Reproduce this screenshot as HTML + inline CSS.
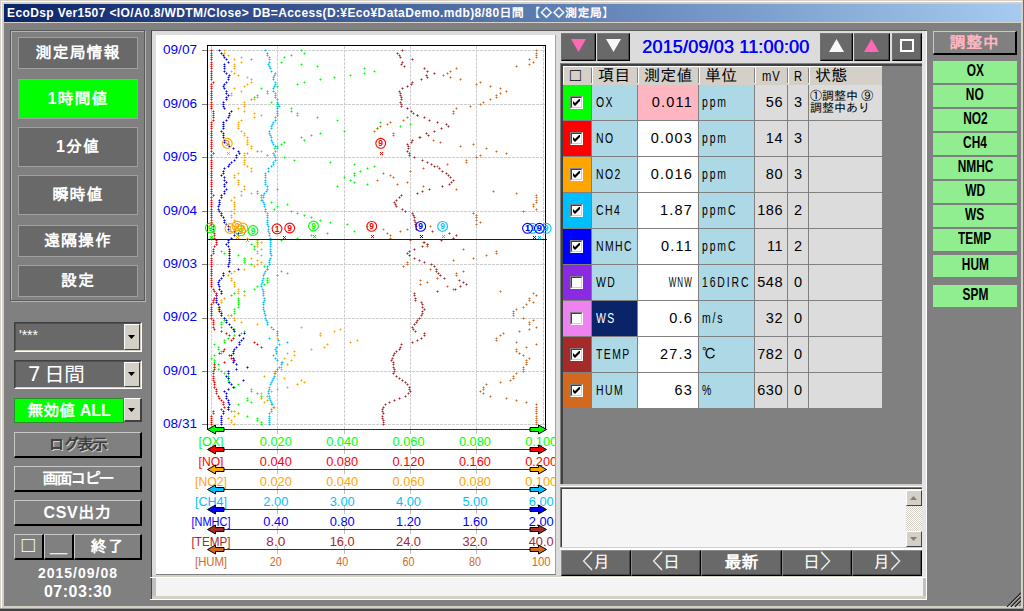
<!DOCTYPE html><html lang="ja"><head><meta charset="utf-8"><title>EcoDsp</title><style>
html,body{margin:0;padding:0;}
body{width:1024px;height:611px;overflow:hidden;background:#808080;position:relative;font-family:"Liberation Sans","IPAGothic","Noto Sans CJK JP",sans-serif;}
div,span{position:absolute;box-sizing:border-box;white-space:nowrap;}
.t{line-height:1;}
.btn{background:#696969;border:1px solid #a0a0a0;color:#fff;text-align:center;}
.rb{background:#808080;border-top:1px solid #c8c8c8;border-left:1px solid #c8c8c8;border-right:2px solid #000;border-bottom:2px solid #000;color:#fff;text-align:center;}
.db{background:#696969;border-top:1px solid #8c8c8c;border-left:1px solid #8c8c8c;border-right:1px solid #000;border-bottom:1px solid #000;color:#fff;text-align:center;box-shadow:inset -1px -1px 0 #484848;}
.tb{border-top-color:#7a7a7a;border-left-color:#707070;}
.gl{background:#90ee90;color:#000;text-align:center;font-weight:bold;font-size:17px;}
.gl span{position:static;display:inline-block;transform:scaleX(.7);line-height:20px;}
.cell{overflow:hidden;font-size:14.5px;line-height:35px;color:#000;}
</style></head><body><div style="left:0px;top:0px;width:1024px;height:611px;background:#d4d0c8;"></div>
<div style="left:1px;top:1px;width:1021px;height:1px;background:#ffffff;"></div>
<div style="left:1px;top:1px;width:1px;height:607px;background:#ffffff;"></div>
<div style="left:4px;top:4px;width:1017px;height:602px;background:#808080;"></div>
<div style="left:0px;top:609px;width:1024px;height:2px;background:#404040;"></div>
<div style="left:0px;top:608px;width:1024px;height:1px;background:#a09d96;"></div>
<div style="left:1023px;top:0px;width:1px;height:611px;background:#6e6c68;"></div>
<div style="left:4px;top:4px;width:1017px;height:18px;background:linear-gradient(to right,#0a246a,#a6caf0);"></div>
<div style="left:4px;top:22px;width:1017px;height:1px;background:#d4d0c8;"></div>
<div class="t" id="title" style="left:7px;top:7px;color:#fff;font-weight:bold;font-size:12px;letter-spacing:0.38px;">EcoDsp Ver1507 &lt;IO/A0.8/WDTM/Close&gt; DB=Access(D:¥Eco¥DataDemo.mdb)8/80日間 【◇◇測定局】</div>
<div style="left:11px;top:31px;width:135px;height:271px;border:1px solid #b4b4b4;"></div>
<div style="left:10px;top:30px;width:135px;height:271px;border:1px solid #5a5a5a;"></div>
<div class="btn" style="left:18px;top:37px;width:120px;height:32px;background:#696969;font-size:16px;line-height:30px;font-weight:bold;letter-spacing:1px;">測定局情報</div>
<div class="btn" style="left:18px;top:79px;width:120px;height:40px;background:#00ff00;font-size:16px;line-height:38px;font-weight:bold;letter-spacing:1px;">1時間値</div>
<div class="btn" style="left:18px;top:127px;width:120px;height:40px;background:#696969;font-size:16px;line-height:38px;font-weight:bold;letter-spacing:1px;">1分値</div>
<div class="btn" style="left:18px;top:175px;width:120px;height:40px;background:#696969;font-size:16px;line-height:38px;font-weight:bold;letter-spacing:1px;">瞬時値</div>
<div class="btn" style="left:18px;top:225px;width:120px;height:32px;background:#696969;font-size:16px;line-height:30px;font-weight:bold;letter-spacing:1px;">遠隔操作</div>
<div class="btn" style="left:18px;top:265px;width:120px;height:32px;background:#696969;font-size:16px;line-height:30px;font-weight:bold;letter-spacing:1px;">設定</div>
<div style="left:14px;top:322px;width:128px;height:30px;border-top:1px solid #404040;border-left:1px solid #404040;border-right:1px solid #fff;border-bottom:1px solid #fff;"></div>
<div style="left:15px;top:323px;width:126px;height:28px;background:#696969;border-top:1px solid #505050;border-left:1px solid #505050;border-right:1px solid #d4d0c8;border-bottom:1px solid #d4d0c8;"></div>
<div class="t" style="left:19px;top:320px;height:30px;line-height:30px;letter-spacing:0px;color:#fff;font-size:14px;">'***</div>
<div style="left:124px;top:324px;width:16px;height:26px;background:#d4d0c8;border-top:1px solid #fff;border-left:1px solid #fff;border-right:1px solid #404040;border-bottom:1px solid #404040;"></div>
<svg style="position:absolute;left:128px;top:335px" width="8" height="5"><path d="M0 0h7l-3.5 4z" fill="#000"/></svg>
<div style="left:14px;top:360px;width:128px;height:29px;border-top:1px solid #404040;border-left:1px solid #404040;border-right:1px solid #fff;border-bottom:1px solid #fff;"></div>
<div style="left:15px;top:361px;width:126px;height:27px;background:#696969;border-top:1px solid #505050;border-left:1px solid #505050;border-right:1px solid #d4d0c8;border-bottom:1px solid #d4d0c8;"></div>
<div class="t" style="left:24px;top:360px;height:29px;line-height:29px;letter-spacing:-1px;color:#fff;font-size:21px;">７日間</div>
<div style="left:124px;top:362px;width:16px;height:25px;background:#d4d0c8;border-top:1px solid #fff;border-left:1px solid #fff;border-right:1px solid #404040;border-bottom:1px solid #404040;"></div>
<svg style="position:absolute;left:128px;top:372px" width="8" height="5"><path d="M0 0h7l-3.5 4z" fill="#000"/></svg>
<div style="left:14px;top:398px;width:110px;height:25px;background:#00ff00;border:1px solid #2e8b2e;"></div>
<div class="t" style="left:14px;top:398px;width:110px;height:25px;line-height:25px;color:#fff;font-size:16px;font-weight:bold;text-align:center;">無効値 ALL</div>
<div style="left:124px;top:398px;width:18px;height:24px;background:#d4d0c8;border-top:1px solid #fff;border-left:1px solid #fff;border-right:2px solid #404040;border-bottom:2px solid #404040;"></div>
<svg style="position:absolute;left:128px;top:408px" width="8" height="5"><path d="M0 0h7l-3.5 4z" fill="#000"/></svg>
<div class="rb" style="left:14px;top:432px;width:128px;height:26px;font-size:16px;line-height:23px;color:#404040;font-weight:bold;text-shadow:1px 1px 0 #d0d0d0;letter-spacing:-1.5px;">ログ表示</div>
<div class="rb" style="left:14px;top:466px;width:128px;height:26px;font-size:16px;line-height:23px;color:#fff;font-weight:bold;letter-spacing:-2px;">画面コピー</div>
<div class="rb" style="left:14px;top:500px;width:128px;height:26px;font-size:16px;line-height:23px;color:#fff;font-weight:bold;letter-spacing:0.6px;">CSV出力</div>
<div class="rb" style="left:14px;top:534px;width:30px;height:26px;font-size:22px;line-height:23px;color:#fff;font-weight:bold;line-height:20px;">□</div>
<div class="rb" style="left:44px;top:534px;width:30px;height:26px;font-size:17px;line-height:23px;color:#fff;font-weight:bold;">＿</div>
<div class="rb" style="left:74px;top:534px;width:68px;height:26px;font-size:16px;line-height:23px;color:#fff;font-weight:bold;letter-spacing:1px;">終了</div>
<div class="t" style="left:14px;top:566px;width:128px;text-align:center;color:#fff;font-weight:bold;font-size:14px;letter-spacing:1px;">2015/09/08</div>
<div class="t" style="left:14px;top:584px;width:128px;text-align:center;color:#fff;font-weight:bold;font-size:16px;letter-spacing:0.5px;">07:03:30</div>
<div style="left:151px;top:30px;width:776px;height:1px;background:#5a5a5a;"></div>
<div style="left:151px;top:30px;width:1px;height:569px;background:#484848;"></div>
<div style="left:152px;top:31px;width:409px;height:544px;background:#dcdcdc;"></div>
<div style="left:156px;top:35px;width:399px;height:539px;background:#ffffff;"></div>
<div style="left:555px;top:35px;width:1px;height:539px;background:#a0a0a0;"></div>
<div style="left:156px;top:574px;width:400px;height:1px;background:#808080;"></div>
<div style="left:152px;top:575px;width:775px;height:2px;background:#d4d0c8;"></div>
<div style="left:150px;top:577px;width:777px;height:1px;background:#ffffff;"></div>
<div style="left:152px;top:578px;width:774px;height:18px;background:#f4f4f4;border-left:4px solid #c0c0c0;"></div>
<div style="left:152px;top:596px;width:775px;height:3px;background:#d4d0c8;"></div>
<div style="left:150px;top:599px;width:777px;height:1px;background:#ffffff;"></div>
<div style="left:923px;top:578px;width:3px;height:18px;background:#c0c0c0;"></div>
<div style="left:926px;top:578px;width:1px;height:21px;background:#ffffff;"></div>
<svg style="position:absolute;left:156px;top:35px" width="399" height="539" viewBox="156 35 399 539" font-family="'Liberation Sans','IPAGothic',sans-serif">
<path d="M202 50.5H208" stroke="#808080" stroke-width="1" shape-rendering="crispEdges"/>
<path d="M202 104.5H208" stroke="#808080" stroke-width="1" shape-rendering="crispEdges"/>
<path d="M202 157.5H208" stroke="#808080" stroke-width="1" shape-rendering="crispEdges"/>
<path d="M202 211.5H208" stroke="#808080" stroke-width="1" shape-rendering="crispEdges"/>
<path d="M202 264.5H208" stroke="#808080" stroke-width="1" shape-rendering="crispEdges"/>
<path d="M202 318.5H208" stroke="#808080" stroke-width="1" shape-rendering="crispEdges"/>
<path d="M202 371.5H208" stroke="#808080" stroke-width="1" shape-rendering="crispEdges"/>
<path d="M202 424.5H208" stroke="#808080" stroke-width="1" shape-rendering="crispEdges"/>
<path d="M208 50.5H545 M208 104.5H545 M208 157.5H545 M208 211.5H545 M208 264.5H545 M208 318.5H545 M208 371.5H545 M208 424.5H545 M211.5 46V429 M277.5 46V429 M344.5 46V429 M410.5 46V429 M476.5 46V429 M543.5 46V429" stroke="#cecece" stroke-width="1" stroke-dasharray="3 1" fill="none" shape-rendering="crispEdges"/>
<path d="M277.5 429.5V434.0 M277.5 446.0V454.0 M277.5 466.0V474.0 M277.5 486.0V494.0 M277.5 506.0V514.0 M277.5 526.0V534.0 M277.5 546.0V554.0 M344.5 429.5V434.0 M344.5 446.0V454.0 M344.5 466.0V474.0 M344.5 486.0V494.0 M344.5 506.0V514.0 M344.5 526.0V534.0 M344.5 546.0V554.0 M410.5 429.5V434.0 M410.5 446.0V454.0 M410.5 466.0V474.0 M410.5 486.0V494.0 M410.5 506.0V514.0 M410.5 526.0V534.0 M410.5 546.0V554.0 M476.5 429.5V434.0 M476.5 446.0V454.0 M476.5 466.0V474.0 M476.5 486.0V494.0 M476.5 506.0V514.0 M476.5 526.0V534.0 M476.5 546.0V554.0" stroke="#c0c0c0" stroke-width="1" fill="none" shape-rendering="crispEdges"/>
<text x="163" y="54.3" font-size="13.5" fill="#0000ff" textLength="34" lengthAdjust="spacingAndGlyphs">09/07</text>
<text x="163" y="107.7" font-size="13.5" fill="#0000ff" textLength="34" lengthAdjust="spacingAndGlyphs">09/06</text>
<text x="163" y="161.2" font-size="13.5" fill="#0000ff" textLength="34" lengthAdjust="spacingAndGlyphs">09/05</text>
<text x="163" y="214.6" font-size="13.5" fill="#0000ff" textLength="34" lengthAdjust="spacingAndGlyphs">09/04</text>
<text x="163" y="268.0" font-size="13.5" fill="#0000ff" textLength="34" lengthAdjust="spacingAndGlyphs">09/03</text>
<text x="163" y="321.4" font-size="13.5" fill="#0000ff" textLength="34" lengthAdjust="spacingAndGlyphs">09/02</text>
<text x="163" y="374.9" font-size="13.5" fill="#0000ff" textLength="34" lengthAdjust="spacingAndGlyphs">09/01</text>
<text x="163" y="428.3" font-size="13.5" fill="#0000ff" textLength="34" lengthAdjust="spacingAndGlyphs">08/31</text>
<path d="M260 424h3v1h-3zM261 423h1v3h-1zM260 422h3v1h-3zM261 421h1v3h-1zM256 420h3v1h-3zM257 419h1v3h-1zM256 418h3v1h-3zM257 417h1v3h-1zM246 416h3v1h-3zM247 415h1v3h-1zM237 413h3v1h-3zM238 412h1v3h-1zM230 411h3v1h-3zM231 410h1v3h-1zM227 409h3v1h-3zM228 408h1v3h-1zM227 407h3v1h-3zM228 406h1v3h-1zM237 404h3v1h-3zM238 403h1v3h-1zM250 402h3v1h-3zM251 401h1v3h-1zM246 400h3v1h-3zM247 399h1v3h-1zM246 398h3v1h-3zM247 397h1v3h-1zM260 396h3v1h-3zM261 395h1v3h-1zM256 393h3v1h-3zM257 392h1v3h-1zM250 391h3v1h-3zM251 390h1v3h-1zM250 389h3v1h-3zM251 388h1v3h-1zM233 387h3v1h-3zM234 386h1v3h-1zM237 384h3v1h-3zM238 383h1v3h-1zM227 382h3v1h-3zM228 381h1v3h-1zM227 380h3v1h-3zM228 379h1v3h-1zM227 378h3v1h-3zM228 377h1v3h-1zM227 376h3v1h-3zM228 375h1v3h-1zM223 373h3v1h-3zM224 372h1v3h-1zM220 371h3v1h-3zM221 370h1v3h-1zM217 369h3v1h-3zM218 368h1v3h-1zM213 367h3v1h-3zM214 366h1v3h-1zM217 364h3v1h-3zM218 363h1v3h-1zM213 362h3v1h-3zM214 361h1v3h-1zM213 360h3v1h-3zM214 359h1v3h-1zM210 358h3v1h-3zM211 357h1v3h-1zM213 355h3v1h-3zM214 354h1v3h-1zM220 353h3v1h-3zM221 352h1v3h-1zM220 351h3v1h-3zM221 350h1v3h-1zM217 349h3v1h-3zM218 348h1v3h-1zM217 347h3v1h-3zM218 346h1v3h-1zM213 344h3v1h-3zM214 343h1v3h-1zM223 342h3v1h-3zM224 341h1v3h-1zM223 340h3v1h-3zM224 339h1v3h-1zM227 338h3v1h-3zM228 337h1v3h-1zM233 335h3v1h-3zM234 334h1v3h-1zM240 333h3v1h-3zM241 332h1v3h-1zM243 331h3v1h-3zM244 330h1v3h-1zM233 329h3v1h-3zM234 328h1v3h-1zM220 327h3v1h-3zM221 326h1v3h-1zM220 324h3v1h-3zM221 323h1v3h-1zM220 322h3v1h-3zM221 321h1v3h-1zM223 320h3v1h-3zM224 319h1v3h-1zM223 318h3v1h-3zM224 317h1v3h-1zM230 315h3v1h-3zM231 314h1v3h-1zM233 313h3v1h-3zM234 312h1v3h-1zM233 311h3v1h-3zM234 310h1v3h-1zM233 309h3v1h-3zM234 308h1v3h-1zM237 307h3v1h-3zM238 306h1v3h-1zM237 304h3v1h-3zM238 303h1v3h-1zM237 302h3v1h-3zM238 301h1v3h-1zM237 300h3v1h-3zM238 299h1v3h-1zM237 298h3v1h-3zM238 297h1v3h-1zM230 295h3v1h-3zM231 294h1v3h-1zM233 293h3v1h-3zM234 292h1v3h-1zM243 291h3v1h-3zM244 290h1v3h-1zM253 289h3v1h-3zM254 288h1v3h-1zM256 286h3v1h-3zM257 285h1v3h-1zM263 284h3v1h-3zM264 283h1v3h-1zM266 282h3v1h-3zM267 281h1v3h-1zM266 280h3v1h-3zM267 279h1v3h-1zM266 278h3v1h-3zM267 277h1v3h-1zM276 275h3v1h-3zM277 274h1v3h-1zM286 273h3v1h-3zM287 272h1v3h-1zM280 271h3v1h-3zM281 270h1v3h-1zM266 269h3v1h-3zM267 268h1v3h-1zM263 266h3v1h-3zM264 265h1v3h-1zM250 264h3v1h-3zM251 263h1v3h-1zM243 262h3v1h-3zM244 261h1v3h-1zM243 260h3v1h-3zM244 259h1v3h-1zM243 258h3v1h-3zM244 257h1v3h-1zM237 255h3v1h-3zM238 254h1v3h-1zM223 253h3v1h-3zM224 252h1v3h-1zM220 251h3v1h-3zM221 250h1v3h-1zM253 249h3v1h-3zM254 248h1v3h-1zM253 246h3v1h-3zM254 245h1v3h-1zM250 244h3v1h-3zM251 243h1v3h-1zM256 242h3v1h-3zM257 241h1v3h-1zM280 240h3v1h-3zM281 239h1v3h-1zM296 238h3v1h-3zM297 237h1v3h-1zM310 235h3v1h-3zM311 234h1v3h-1zM326 233h3v1h-3zM327 232h1v3h-1zM353 231h3v1h-3zM354 230h1v3h-1zM382 229h3v1h-3zM383 228h1v3h-1zM366 226h3v1h-3zM367 225h1v3h-1zM346 224h3v1h-3zM347 223h1v3h-1zM329 222h3v1h-3zM330 221h1v3h-1zM319 220h3v1h-3zM320 219h1v3h-1zM310 217h3v1h-3zM311 216h1v3h-1zM303 215h3v1h-3zM304 214h1v3h-1zM296 213h3v1h-3zM297 212h1v3h-1zM290 211h3v1h-3zM291 210h1v3h-1zM273 209h3v1h-3zM274 208h1v3h-1zM276 206h3v1h-3zM277 205h1v3h-1zM286 204h3v1h-3zM287 203h1v3h-1zM270 202h3v1h-3zM271 201h1v3h-1zM260 200h3v1h-3zM261 199h1v3h-1zM260 197h3v1h-3zM261 196h1v3h-1zM260 195h3v1h-3zM261 194h1v3h-1zM256 193h3v1h-3zM257 192h1v3h-1zM256 191h3v1h-3zM257 190h1v3h-1zM276 189h3v1h-3zM277 188h1v3h-1zM336 186h3v1h-3zM337 185h1v3h-1zM366 184h3v1h-3zM367 183h1v3h-1zM353 182h3v1h-3zM354 181h1v3h-1zM349 180h3v1h-3zM350 179h1v3h-1zM343 177h3v1h-3zM344 176h1v3h-1zM353 175h3v1h-3zM354 174h1v3h-1zM353 173h3v1h-3zM354 172h1v3h-1zM359 171h3v1h-3zM360 170h1v3h-1zM366 168h3v1h-3zM367 167h1v3h-1zM373 166h3v1h-3zM374 165h1v3h-1zM353 164h3v1h-3zM354 163h1v3h-1zM329 162h3v1h-3zM330 161h1v3h-1zM293 160h3v1h-3zM294 159h1v3h-1zM283 157h3v1h-3zM284 156h1v3h-1zM266 155h3v1h-3zM267 154h1v3h-1zM246 153h3v1h-3zM247 152h1v3h-1zM256 151h3v1h-3zM257 150h1v3h-1zM273 148h3v1h-3zM274 147h1v3h-1zM276 146h3v1h-3zM277 145h1v3h-1zM280 144h3v1h-3zM281 143h1v3h-1zM283 142h3v1h-3zM284 141h1v3h-1zM303 140h3v1h-3zM304 139h1v3h-1zM300 137h3v1h-3zM301 136h1v3h-1zM310 135h3v1h-3zM311 134h1v3h-1zM319 133h3v1h-3zM320 132h1v3h-1zM343 131h3v1h-3zM344 130h1v3h-1zM376 128h3v1h-3zM377 127h1v3h-1zM399 126h3v1h-3zM400 125h1v3h-1zM409 124h3v1h-3zM410 123h1v3h-1zM379 122h3v1h-3zM380 121h1v3h-1zM336 120h3v1h-3zM337 119h1v3h-1zM316 117h3v1h-3zM317 116h1v3h-1zM296 115h3v1h-3zM297 114h1v3h-1zM296 113h3v1h-3zM297 112h1v3h-1zM290 111h3v1h-3zM291 110h1v3h-1zM290 108h3v1h-3zM291 107h1v3h-1zM276 106h3v1h-3zM277 105h1v3h-1zM276 104h3v1h-3zM277 103h1v3h-1zM270 102h3v1h-3zM271 101h1v3h-1zM250 99h3v1h-3zM251 98h1v3h-1zM253 97h3v1h-3zM254 96h1v3h-1zM256 95h3v1h-3zM257 94h1v3h-1zM266 93h3v1h-3zM267 92h1v3h-1zM266 91h3v1h-3zM267 90h1v3h-1zM260 88h3v1h-3zM261 87h1v3h-1zM276 86h3v1h-3zM277 85h1v3h-1zM296 84h3v1h-3zM297 83h1v3h-1zM303 82h3v1h-3zM304 81h1v3h-1zM319 79h3v1h-3zM320 78h1v3h-1zM333 77h3v1h-3zM334 76h1v3h-1zM349 75h3v1h-3zM350 74h1v3h-1zM363 73h3v1h-3zM364 72h1v3h-1zM373 71h3v1h-3zM374 70h1v3h-1zM363 68h3v1h-3zM364 67h1v3h-1zM316 66h3v1h-3zM317 65h1v3h-1zM300 64h3v1h-3zM301 63h1v3h-1zM280 62h3v1h-3zM281 61h1v3h-1zM250 59h3v1h-3zM251 58h1v3h-1zM283 57h3v1h-3zM284 56h1v3h-1zM290 55h3v1h-3zM291 54h1v3h-1zM303 53h3v1h-3zM304 52h1v3h-1zM300 50h3v1h-3zM301 49h1v3h-1z" fill="#00ff00" fill-opacity=".5" shape-rendering="crispEdges"/>
<path d="M261 424h1v1h-1zM261 422h1v1h-1zM257 420h1v1h-1zM257 418h1v1h-1zM247 416h1v1h-1zM238 413h1v1h-1zM231 411h1v1h-1zM228 409h1v1h-1zM228 407h1v1h-1zM238 404h1v1h-1zM251 402h1v1h-1zM247 400h1v1h-1zM247 398h1v1h-1zM261 396h1v1h-1zM257 393h1v1h-1zM251 391h1v1h-1zM251 389h1v1h-1zM234 387h1v1h-1zM238 384h1v1h-1zM228 382h1v1h-1zM228 380h1v1h-1zM228 378h1v1h-1zM228 376h1v1h-1zM224 373h1v1h-1zM221 371h1v1h-1zM218 369h1v1h-1zM214 367h1v1h-1zM218 364h1v1h-1zM214 362h1v1h-1zM214 360h1v1h-1zM211 358h1v1h-1zM214 355h1v1h-1zM221 353h1v1h-1zM221 351h1v1h-1zM218 349h1v1h-1zM218 347h1v1h-1zM214 344h1v1h-1zM224 342h1v1h-1zM224 340h1v1h-1zM228 338h1v1h-1zM234 335h1v1h-1zM241 333h1v1h-1zM244 331h1v1h-1zM234 329h1v1h-1zM221 327h1v1h-1zM221 324h1v1h-1zM221 322h1v1h-1zM224 320h1v1h-1zM224 318h1v1h-1zM231 315h1v1h-1zM234 313h1v1h-1zM234 311h1v1h-1zM234 309h1v1h-1zM238 307h1v1h-1zM238 304h1v1h-1zM238 302h1v1h-1zM238 300h1v1h-1zM238 298h1v1h-1zM231 295h1v1h-1zM234 293h1v1h-1zM244 291h1v1h-1zM254 289h1v1h-1zM257 286h1v1h-1zM264 284h1v1h-1zM267 282h1v1h-1zM267 280h1v1h-1zM267 278h1v1h-1zM277 275h1v1h-1zM287 273h1v1h-1zM281 271h1v1h-1zM267 269h1v1h-1zM264 266h1v1h-1zM251 264h1v1h-1zM244 262h1v1h-1zM244 260h1v1h-1zM244 258h1v1h-1zM238 255h1v1h-1zM224 253h1v1h-1zM221 251h1v1h-1zM254 249h1v1h-1zM254 246h1v1h-1zM251 244h1v1h-1zM257 242h1v1h-1zM281 240h1v1h-1zM297 238h1v1h-1zM311 235h1v1h-1zM327 233h1v1h-1zM354 231h1v1h-1zM383 229h1v1h-1zM367 226h1v1h-1zM347 224h1v1h-1zM330 222h1v1h-1zM320 220h1v1h-1zM311 217h1v1h-1zM304 215h1v1h-1zM297 213h1v1h-1zM291 211h1v1h-1zM274 209h1v1h-1zM277 206h1v1h-1zM287 204h1v1h-1zM271 202h1v1h-1zM261 200h1v1h-1zM261 197h1v1h-1zM261 195h1v1h-1zM257 193h1v1h-1zM257 191h1v1h-1zM277 189h1v1h-1zM337 186h1v1h-1zM367 184h1v1h-1zM354 182h1v1h-1zM350 180h1v1h-1zM344 177h1v1h-1zM354 175h1v1h-1zM354 173h1v1h-1zM360 171h1v1h-1zM367 168h1v1h-1zM374 166h1v1h-1zM354 164h1v1h-1zM330 162h1v1h-1zM294 160h1v1h-1zM284 157h1v1h-1zM267 155h1v1h-1zM247 153h1v1h-1zM257 151h1v1h-1zM274 148h1v1h-1zM277 146h1v1h-1zM281 144h1v1h-1zM284 142h1v1h-1zM304 140h1v1h-1zM301 137h1v1h-1zM311 135h1v1h-1zM320 133h1v1h-1zM344 131h1v1h-1zM377 128h1v1h-1zM400 126h1v1h-1zM410 124h1v1h-1zM380 122h1v1h-1zM337 120h1v1h-1zM317 117h1v1h-1zM297 115h1v1h-1zM297 113h1v1h-1zM291 111h1v1h-1zM291 108h1v1h-1zM277 106h1v1h-1zM277 104h1v1h-1zM271 102h1v1h-1zM251 99h1v1h-1zM254 97h1v1h-1zM257 95h1v1h-1zM267 93h1v1h-1zM267 91h1v1h-1zM261 88h1v1h-1zM277 86h1v1h-1zM297 84h1v1h-1zM304 82h1v1h-1zM320 79h1v1h-1zM334 77h1v1h-1zM350 75h1v1h-1zM364 73h1v1h-1zM374 71h1v1h-1zM364 68h1v1h-1zM317 66h1v1h-1zM301 64h1v1h-1zM281 62h1v1h-1zM251 59h1v1h-1zM284 57h1v1h-1zM291 55h1v1h-1zM304 53h1v1h-1zM301 50h1v1h-1z" fill="#00ff00" shape-rendering="crispEdges"/>
<path d="M233 424h3v1h-3zM234 423h1v3h-1zM230 422h3v1h-3zM231 421h1v3h-1zM230 420h3v1h-3zM231 419h1v3h-1zM227 418h3v1h-3zM228 417h1v3h-1zM233 416h3v1h-3zM234 415h1v3h-1zM237 413h3v1h-3zM238 412h1v3h-1zM233 411h3v1h-3zM234 410h1v3h-1zM227 409h3v1h-3zM228 408h1v3h-1zM273 407h3v1h-3zM274 406h1v3h-1zM270 404h3v1h-3zM271 403h1v3h-1zM263 402h3v1h-3zM264 401h1v3h-1zM266 400h3v1h-3zM267 399h1v3h-1zM260 398h3v1h-3zM261 397h1v3h-1zM266 396h3v1h-3zM267 395h1v3h-1zM260 393h3v1h-3zM261 392h1v3h-1zM270 391h3v1h-3zM271 390h1v3h-1zM276 389h3v1h-3zM277 388h1v3h-1zM286 387h3v1h-3zM287 386h1v3h-1zM296 384h3v1h-3zM297 383h1v3h-1zM303 382h3v1h-3zM304 381h1v3h-1zM300 380h3v1h-3zM301 379h1v3h-1zM283 378h3v1h-3zM284 377h1v3h-1zM263 376h3v1h-3zM264 375h1v3h-1zM273 373h3v1h-3zM274 372h1v3h-1zM276 371h3v1h-3zM277 370h1v3h-1zM280 369h3v1h-3zM281 368h1v3h-1zM280 367h3v1h-3zM281 366h1v3h-1zM286 364h3v1h-3zM287 363h1v3h-1zM280 362h3v1h-3zM281 361h1v3h-1zM290 360h3v1h-3zM291 359h1v3h-1zM283 358h3v1h-3zM284 357h1v3h-1zM293 355h3v1h-3zM294 354h1v3h-1zM286 353h3v1h-3zM287 352h1v3h-1zM293 351h3v1h-3zM294 350h1v3h-1zM310 349h3v1h-3zM311 348h1v3h-1zM323 347h3v1h-3zM324 346h1v3h-1zM326 344h3v1h-3zM327 343h1v3h-1zM349 342h3v1h-3zM350 341h1v3h-1zM356 340h3v1h-3zM357 339h1v3h-1zM276 338h3v1h-3zM277 337h1v3h-1zM319 335h3v1h-3zM320 334h1v3h-1zM319 333h3v1h-3zM320 332h1v3h-1zM333 331h3v1h-3zM334 330h1v3h-1zM339 329h3v1h-3zM340 328h1v3h-1zM300 327h3v1h-3zM301 326h1v3h-1zM256 324h3v1h-3zM257 323h1v3h-1zM240 322h3v1h-3zM241 321h1v3h-1zM233 320h3v1h-3zM234 319h1v3h-1zM233 318h3v1h-3zM234 317h1v3h-1zM227 315h3v1h-3zM228 314h1v3h-1zM220 313h3v1h-3zM221 312h1v3h-1zM220 311h3v1h-3zM221 310h1v3h-1zM217 309h3v1h-3zM218 308h1v3h-1zM217 307h3v1h-3zM218 306h1v3h-1zM217 304h3v1h-3zM218 303h1v3h-1zM220 302h3v1h-3zM221 301h1v3h-1zM220 300h3v1h-3zM221 299h1v3h-1zM223 298h3v1h-3zM224 297h1v3h-1zM243 295h3v1h-3zM244 294h1v3h-1zM237 293h3v1h-3zM238 292h1v3h-1zM237 291h3v1h-3zM238 290h1v3h-1zM237 289h3v1h-3zM238 288h1v3h-1zM233 286h3v1h-3zM234 285h1v3h-1zM233 284h3v1h-3zM234 283h1v3h-1zM233 282h3v1h-3zM234 281h1v3h-1zM230 280h3v1h-3zM231 279h1v3h-1zM230 278h3v1h-3zM231 277h1v3h-1zM227 275h3v1h-3zM228 274h1v3h-1zM230 273h3v1h-3zM231 272h1v3h-1zM233 271h3v1h-3zM234 270h1v3h-1zM243 269h3v1h-3zM244 268h1v3h-1zM253 266h3v1h-3zM254 265h1v3h-1zM256 264h3v1h-3zM257 263h1v3h-1zM260 262h3v1h-3zM261 261h1v3h-1zM256 260h3v1h-3zM257 259h1v3h-1zM250 258h3v1h-3zM251 257h1v3h-1zM260 255h3v1h-3zM261 254h1v3h-1zM256 253h3v1h-3zM257 252h1v3h-1zM256 251h3v1h-3zM257 250h1v3h-1zM260 249h3v1h-3zM261 248h1v3h-1zM256 246h3v1h-3zM257 245h1v3h-1zM256 244h3v1h-3zM257 243h1v3h-1zM260 242h3v1h-3zM261 241h1v3h-1zM256 240h3v1h-3zM257 239h1v3h-1zM246 238h3v1h-3zM247 237h1v3h-1zM237 235h3v1h-3zM238 234h1v3h-1zM233 233h3v1h-3zM234 232h1v3h-1zM230 231h3v1h-3zM231 230h1v3h-1zM233 229h3v1h-3zM234 228h1v3h-1zM233 226h3v1h-3zM234 225h1v3h-1zM237 224h3v1h-3zM238 223h1v3h-1zM233 222h3v1h-3zM234 221h1v3h-1zM233 220h3v1h-3zM234 219h1v3h-1zM230 217h3v1h-3zM231 216h1v3h-1zM230 215h3v1h-3zM231 214h1v3h-1zM233 213h3v1h-3zM234 212h1v3h-1zM230 211h3v1h-3zM231 210h1v3h-1zM233 209h3v1h-3zM234 208h1v3h-1zM233 206h3v1h-3zM234 205h1v3h-1zM233 204h3v1h-3zM234 203h1v3h-1zM233 202h3v1h-3zM234 201h1v3h-1zM230 200h3v1h-3zM231 199h1v3h-1zM233 197h3v1h-3zM234 196h1v3h-1zM240 195h3v1h-3zM241 194h1v3h-1zM250 193h3v1h-3zM251 192h1v3h-1zM240 191h3v1h-3zM241 190h1v3h-1zM243 189h3v1h-3zM244 188h1v3h-1zM243 186h3v1h-3zM244 185h1v3h-1zM237 184h3v1h-3zM238 183h1v3h-1zM237 182h3v1h-3zM238 181h1v3h-1zM237 180h3v1h-3zM238 179h1v3h-1zM233 177h3v1h-3zM234 176h1v3h-1zM233 175h3v1h-3zM234 174h1v3h-1zM237 173h3v1h-3zM238 172h1v3h-1zM250 171h3v1h-3zM251 170h1v3h-1zM250 168h3v1h-3zM251 167h1v3h-1zM246 166h3v1h-3zM247 165h1v3h-1zM243 164h3v1h-3zM244 163h1v3h-1zM243 162h3v1h-3zM244 161h1v3h-1zM243 160h3v1h-3zM244 159h1v3h-1zM243 157h3v1h-3zM244 156h1v3h-1zM243 155h3v1h-3zM244 154h1v3h-1zM243 153h3v1h-3zM244 152h1v3h-1zM260 151h3v1h-3zM261 150h1v3h-1zM250 148h3v1h-3zM251 147h1v3h-1zM250 146h3v1h-3zM251 145h1v3h-1zM246 144h3v1h-3zM247 143h1v3h-1zM246 142h3v1h-3zM247 141h1v3h-1zM246 140h3v1h-3zM247 139h1v3h-1zM246 137h3v1h-3zM247 136h1v3h-1zM243 135h3v1h-3zM244 134h1v3h-1zM243 133h3v1h-3zM244 132h1v3h-1zM240 131h3v1h-3zM241 130h1v3h-1zM237 128h3v1h-3zM238 127h1v3h-1zM237 126h3v1h-3zM238 125h1v3h-1zM237 124h3v1h-3zM238 123h1v3h-1zM237 122h3v1h-3zM238 121h1v3h-1zM240 120h3v1h-3zM241 119h1v3h-1zM253 117h3v1h-3zM254 116h1v3h-1zM260 115h3v1h-3zM261 114h1v3h-1zM253 113h3v1h-3zM254 112h1v3h-1zM243 111h3v1h-3zM244 110h1v3h-1zM237 108h3v1h-3zM238 107h1v3h-1zM243 106h3v1h-3zM244 105h1v3h-1zM243 104h3v1h-3zM244 103h1v3h-1zM243 102h3v1h-3zM244 101h1v3h-1zM253 99h3v1h-3zM254 98h1v3h-1zM256 97h3v1h-3zM257 96h1v3h-1zM230 95h3v1h-3zM231 94h1v3h-1zM230 93h3v1h-3zM231 92h1v3h-1zM240 91h3v1h-3zM241 90h1v3h-1zM233 88h3v1h-3zM234 87h1v3h-1zM243 86h3v1h-3zM244 85h1v3h-1zM246 84h3v1h-3zM247 83h1v3h-1zM250 82h3v1h-3zM251 81h1v3h-1zM250 79h3v1h-3zM251 78h1v3h-1zM246 77h3v1h-3zM247 76h1v3h-1zM237 75h3v1h-3zM238 74h1v3h-1zM233 73h3v1h-3zM234 72h1v3h-1zM230 71h3v1h-3zM231 70h1v3h-1zM233 68h3v1h-3zM234 67h1v3h-1zM233 66h3v1h-3zM234 65h1v3h-1zM233 64h3v1h-3zM234 63h1v3h-1zM240 62h3v1h-3zM241 61h1v3h-1zM233 59h3v1h-3zM234 58h1v3h-1zM240 57h3v1h-3zM241 56h1v3h-1zM227 55h3v1h-3zM228 54h1v3h-1zM223 53h3v1h-3zM224 52h1v3h-1zM223 50h3v1h-3zM224 49h1v3h-1z" fill="#ffa500" fill-opacity=".5" shape-rendering="crispEdges"/>
<path d="M234 424h1v1h-1zM231 422h1v1h-1zM231 420h1v1h-1zM228 418h1v1h-1zM234 416h1v1h-1zM238 413h1v1h-1zM234 411h1v1h-1zM228 409h1v1h-1zM274 407h1v1h-1zM271 404h1v1h-1zM264 402h1v1h-1zM267 400h1v1h-1zM261 398h1v1h-1zM267 396h1v1h-1zM261 393h1v1h-1zM271 391h1v1h-1zM277 389h1v1h-1zM287 387h1v1h-1zM297 384h1v1h-1zM304 382h1v1h-1zM301 380h1v1h-1zM284 378h1v1h-1zM264 376h1v1h-1zM274 373h1v1h-1zM277 371h1v1h-1zM281 369h1v1h-1zM281 367h1v1h-1zM287 364h1v1h-1zM281 362h1v1h-1zM291 360h1v1h-1zM284 358h1v1h-1zM294 355h1v1h-1zM287 353h1v1h-1zM294 351h1v1h-1zM311 349h1v1h-1zM324 347h1v1h-1zM327 344h1v1h-1zM350 342h1v1h-1zM357 340h1v1h-1zM277 338h1v1h-1zM320 335h1v1h-1zM320 333h1v1h-1zM334 331h1v1h-1zM340 329h1v1h-1zM301 327h1v1h-1zM257 324h1v1h-1zM241 322h1v1h-1zM234 320h1v1h-1zM234 318h1v1h-1zM228 315h1v1h-1zM221 313h1v1h-1zM221 311h1v1h-1zM218 309h1v1h-1zM218 307h1v1h-1zM218 304h1v1h-1zM221 302h1v1h-1zM221 300h1v1h-1zM224 298h1v1h-1zM244 295h1v1h-1zM238 293h1v1h-1zM238 291h1v1h-1zM238 289h1v1h-1zM234 286h1v1h-1zM234 284h1v1h-1zM234 282h1v1h-1zM231 280h1v1h-1zM231 278h1v1h-1zM228 275h1v1h-1zM231 273h1v1h-1zM234 271h1v1h-1zM244 269h1v1h-1zM254 266h1v1h-1zM257 264h1v1h-1zM261 262h1v1h-1zM257 260h1v1h-1zM251 258h1v1h-1zM261 255h1v1h-1zM257 253h1v1h-1zM257 251h1v1h-1zM261 249h1v1h-1zM257 246h1v1h-1zM257 244h1v1h-1zM261 242h1v1h-1zM257 240h1v1h-1zM247 238h1v1h-1zM238 235h1v1h-1zM234 233h1v1h-1zM231 231h1v1h-1zM234 229h1v1h-1zM234 226h1v1h-1zM238 224h1v1h-1zM234 222h1v1h-1zM234 220h1v1h-1zM231 217h1v1h-1zM231 215h1v1h-1zM234 213h1v1h-1zM231 211h1v1h-1zM234 209h1v1h-1zM234 206h1v1h-1zM234 204h1v1h-1zM234 202h1v1h-1zM231 200h1v1h-1zM234 197h1v1h-1zM241 195h1v1h-1zM251 193h1v1h-1zM241 191h1v1h-1zM244 189h1v1h-1zM244 186h1v1h-1zM238 184h1v1h-1zM238 182h1v1h-1zM238 180h1v1h-1zM234 177h1v1h-1zM234 175h1v1h-1zM238 173h1v1h-1zM251 171h1v1h-1zM251 168h1v1h-1zM247 166h1v1h-1zM244 164h1v1h-1zM244 162h1v1h-1zM244 160h1v1h-1zM244 157h1v1h-1zM244 155h1v1h-1zM244 153h1v1h-1zM261 151h1v1h-1zM251 148h1v1h-1zM251 146h1v1h-1zM247 144h1v1h-1zM247 142h1v1h-1zM247 140h1v1h-1zM247 137h1v1h-1zM244 135h1v1h-1zM244 133h1v1h-1zM241 131h1v1h-1zM238 128h1v1h-1zM238 126h1v1h-1zM238 124h1v1h-1zM238 122h1v1h-1zM241 120h1v1h-1zM254 117h1v1h-1zM261 115h1v1h-1zM254 113h1v1h-1zM244 111h1v1h-1zM238 108h1v1h-1zM244 106h1v1h-1zM244 104h1v1h-1zM244 102h1v1h-1zM254 99h1v1h-1zM257 97h1v1h-1zM231 95h1v1h-1zM231 93h1v1h-1zM241 91h1v1h-1zM234 88h1v1h-1zM244 86h1v1h-1zM247 84h1v1h-1zM251 82h1v1h-1zM251 79h1v1h-1zM247 77h1v1h-1zM238 75h1v1h-1zM234 73h1v1h-1zM231 71h1v1h-1zM234 68h1v1h-1zM234 66h1v1h-1zM234 64h1v1h-1zM241 62h1v1h-1zM234 59h1v1h-1zM241 57h1v1h-1zM228 55h1v1h-1zM224 53h1v1h-1zM224 50h1v1h-1z" fill="#ffa500" shape-rendering="crispEdges"/>
<path d="M268 424h3v1h-3zM269 423h1v3h-1zM268 422h3v1h-3zM269 421h1v3h-1zM268 420h3v1h-3zM269 419h1v3h-1zM268 418h3v1h-3zM269 417h1v3h-1zM268 416h3v1h-3zM269 415h1v3h-1zM268 413h3v1h-3zM269 412h1v3h-1zM270 411h3v1h-3zM271 410h1v3h-1zM270 409h3v1h-3zM271 408h1v3h-1zM272 407h3v1h-3zM273 406h1v3h-1zM271 404h3v1h-3zM272 403h1v3h-1zM270 402h3v1h-3zM271 401h1v3h-1zM269 400h3v1h-3zM270 399h1v3h-1zM268 398h3v1h-3zM269 397h1v3h-1zM268 396h3v1h-3zM269 395h1v3h-1zM267 393h3v1h-3zM268 392h1v3h-1zM267 391h3v1h-3zM268 390h1v3h-1zM268 389h3v1h-3zM269 388h1v3h-1zM268 387h3v1h-3zM269 386h1v3h-1zM269 384h3v1h-3zM270 383h1v3h-1zM270 382h3v1h-3zM271 381h1v3h-1zM271 380h3v1h-3zM272 379h1v3h-1zM272 378h3v1h-3zM273 377h1v3h-1zM273 376h3v1h-3zM274 375h1v3h-1zM274 373h3v1h-3zM275 372h1v3h-1zM274 371h3v1h-3zM275 370h1v3h-1zM276 369h3v1h-3zM277 368h1v3h-1zM278 367h3v1h-3zM279 366h1v3h-1zM280 364h3v1h-3zM281 363h1v3h-1zM281 362h3v1h-3zM282 361h1v3h-1zM276 360h3v1h-3zM277 359h1v3h-1zM274 358h3v1h-3zM275 357h1v3h-1zM272 355h3v1h-3zM273 354h1v3h-1zM275 353h3v1h-3zM276 352h1v3h-1zM275 351h3v1h-3zM276 350h1v3h-1zM274 349h3v1h-3zM275 348h1v3h-1zM275 347h3v1h-3zM276 346h1v3h-1zM278 344h3v1h-3zM279 343h1v3h-1zM286 342h3v1h-3zM287 341h1v3h-1zM277 340h3v1h-3zM278 339h1v3h-1zM268 338h3v1h-3zM269 337h1v3h-1zM276 335h3v1h-3zM277 334h1v3h-1zM276 333h3v1h-3zM277 332h1v3h-1zM276 331h3v1h-3zM277 330h1v3h-1zM272 329h3v1h-3zM273 328h1v3h-1zM270 327h3v1h-3zM271 326h1v3h-1zM266 324h3v1h-3zM267 323h1v3h-1zM266 322h3v1h-3zM267 321h1v3h-1zM265 320h3v1h-3zM266 319h1v3h-1zM264 318h3v1h-3zM265 317h1v3h-1zM264 315h3v1h-3zM265 314h1v3h-1zM263 313h3v1h-3zM264 312h1v3h-1zM263 311h3v1h-3zM264 310h1v3h-1zM262 309h3v1h-3zM263 308h1v3h-1zM262 307h3v1h-3zM263 306h1v3h-1zM262 304h3v1h-3zM263 303h1v3h-1zM262 302h3v1h-3zM263 301h1v3h-1zM263 300h3v1h-3zM264 299h1v3h-1zM263 298h3v1h-3zM264 297h1v3h-1zM262 295h3v1h-3zM263 294h1v3h-1zM262 293h3v1h-3zM263 292h1v3h-1zM262 291h3v1h-3zM263 290h1v3h-1zM261 289h3v1h-3zM262 288h1v3h-1zM260 286h3v1h-3zM261 285h1v3h-1zM260 284h3v1h-3zM261 283h1v3h-1zM261 282h3v1h-3zM262 281h1v3h-1zM261 280h3v1h-3zM262 279h1v3h-1zM262 278h3v1h-3zM263 277h1v3h-1zM262 275h3v1h-3zM263 274h1v3h-1zM263 273h3v1h-3zM264 272h1v3h-1zM264 271h3v1h-3zM265 270h1v3h-1zM266 269h3v1h-3zM267 268h1v3h-1zM266 266h3v1h-3zM267 265h1v3h-1zM268 264h3v1h-3zM269 263h1v3h-1zM268 262h3v1h-3zM269 261h1v3h-1zM268 260h3v1h-3zM269 259h1v3h-1zM269 258h3v1h-3zM270 257h1v3h-1zM270 255h3v1h-3zM271 254h1v3h-1zM269 253h3v1h-3zM270 252h1v3h-1zM269 251h3v1h-3zM270 250h1v3h-1zM269 249h3v1h-3zM270 248h1v3h-1zM269 246h3v1h-3zM270 245h1v3h-1zM269 244h3v1h-3zM270 243h1v3h-1zM269 242h3v1h-3zM270 241h1v3h-1zM269 240h3v1h-3zM270 239h1v3h-1zM269 238h3v1h-3zM270 237h1v3h-1zM268 235h3v1h-3zM269 234h1v3h-1zM268 233h3v1h-3zM269 232h1v3h-1zM267 231h3v1h-3zM268 230h1v3h-1zM267 229h3v1h-3zM268 228h1v3h-1zM267 226h3v1h-3zM268 225h1v3h-1zM266 224h3v1h-3zM267 223h1v3h-1zM266 222h3v1h-3zM267 221h1v3h-1zM266 220h3v1h-3zM267 219h1v3h-1zM266 217h3v1h-3zM267 216h1v3h-1zM266 215h3v1h-3zM267 214h1v3h-1zM266 213h3v1h-3zM267 212h1v3h-1zM264 211h3v1h-3zM265 210h1v3h-1zM264 209h3v1h-3zM265 208h1v3h-1zM263 206h3v1h-3zM264 205h1v3h-1zM263 204h3v1h-3zM264 203h1v3h-1zM262 202h3v1h-3zM263 201h1v3h-1zM261 200h3v1h-3zM262 199h1v3h-1zM262 197h3v1h-3zM263 196h1v3h-1zM262 195h3v1h-3zM263 194h1v3h-1zM263 193h3v1h-3zM264 192h1v3h-1zM265 191h3v1h-3zM266 190h1v3h-1zM266 189h3v1h-3zM267 188h1v3h-1zM266 186h3v1h-3zM267 185h1v3h-1zM264 184h3v1h-3zM265 183h1v3h-1zM264 182h3v1h-3zM265 181h1v3h-1zM264 180h3v1h-3zM265 179h1v3h-1zM264 177h3v1h-3zM265 176h1v3h-1zM264 175h3v1h-3zM265 174h1v3h-1zM264 173h3v1h-3zM265 172h1v3h-1zM267 171h3v1h-3zM268 170h1v3h-1zM267 168h3v1h-3zM268 167h1v3h-1zM270 166h3v1h-3zM271 165h1v3h-1zM272 164h3v1h-3zM273 163h1v3h-1zM272 162h3v1h-3zM273 161h1v3h-1zM274 160h3v1h-3zM275 159h1v3h-1zM274 157h3v1h-3zM275 156h1v3h-1zM273 155h3v1h-3zM274 154h1v3h-1zM272 153h3v1h-3zM273 152h1v3h-1zM274 151h3v1h-3zM275 150h1v3h-1zM276 148h3v1h-3zM277 147h1v3h-1zM274 146h3v1h-3zM275 145h1v3h-1zM272 144h3v1h-3zM273 143h1v3h-1zM271 142h3v1h-3zM272 141h1v3h-1zM270 140h3v1h-3zM271 139h1v3h-1zM270 137h3v1h-3zM271 136h1v3h-1zM269 135h3v1h-3zM270 134h1v3h-1zM268 133h3v1h-3zM269 132h1v3h-1zM268 131h3v1h-3zM269 130h1v3h-1zM270 128h3v1h-3zM271 127h1v3h-1zM270 126h3v1h-3zM271 125h1v3h-1zM271 124h3v1h-3zM272 123h1v3h-1zM272 122h3v1h-3zM273 121h1v3h-1zM274 120h3v1h-3zM275 119h1v3h-1zM274 117h3v1h-3zM275 116h1v3h-1zM276 115h3v1h-3zM277 114h1v3h-1zM276 113h3v1h-3zM277 112h1v3h-1zM276 111h3v1h-3zM277 110h1v3h-1zM276 108h3v1h-3zM277 107h1v3h-1zM278 106h3v1h-3zM279 105h1v3h-1zM277 104h3v1h-3zM278 103h1v3h-1zM276 102h3v1h-3zM277 101h1v3h-1zM276 99h3v1h-3zM277 98h1v3h-1zM274 97h3v1h-3zM275 96h1v3h-1zM274 95h3v1h-3zM275 94h1v3h-1zM274 93h3v1h-3zM275 92h1v3h-1zM272 91h3v1h-3zM273 90h1v3h-1zM272 88h3v1h-3zM273 87h1v3h-1zM273 86h3v1h-3zM274 85h1v3h-1zM274 84h3v1h-3zM275 83h1v3h-1zM274 82h3v1h-3zM275 81h1v3h-1zM272 79h3v1h-3zM273 78h1v3h-1zM272 77h3v1h-3zM273 76h1v3h-1zM273 75h3v1h-3zM274 74h1v3h-1zM274 73h3v1h-3zM275 72h1v3h-1zM270 71h3v1h-3zM271 70h1v3h-1zM269 68h3v1h-3zM270 67h1v3h-1zM268 66h3v1h-3zM269 65h1v3h-1zM267 64h3v1h-3zM268 63h1v3h-1zM268 62h3v1h-3zM269 61h1v3h-1zM268 59h3v1h-3zM269 58h1v3h-1zM268 57h3v1h-3zM269 56h1v3h-1zM266 55h3v1h-3zM267 54h1v3h-1zM266 53h3v1h-3zM267 52h1v3h-1zM264 50h3v1h-3zM265 49h1v3h-1z" fill="#00bfff" fill-opacity=".5" shape-rendering="crispEdges"/>
<path d="M269 424h1v1h-1zM269 422h1v1h-1zM269 420h1v1h-1zM269 418h1v1h-1zM269 416h1v1h-1zM269 413h1v1h-1zM271 411h1v1h-1zM271 409h1v1h-1zM273 407h1v1h-1zM272 404h1v1h-1zM271 402h1v1h-1zM270 400h1v1h-1zM269 398h1v1h-1zM269 396h1v1h-1zM268 393h1v1h-1zM268 391h1v1h-1zM269 389h1v1h-1zM269 387h1v1h-1zM270 384h1v1h-1zM271 382h1v1h-1zM272 380h1v1h-1zM273 378h1v1h-1zM274 376h1v1h-1zM275 373h1v1h-1zM275 371h1v1h-1zM277 369h1v1h-1zM279 367h1v1h-1zM281 364h1v1h-1zM282 362h1v1h-1zM277 360h1v1h-1zM275 358h1v1h-1zM273 355h1v1h-1zM276 353h1v1h-1zM276 351h1v1h-1zM275 349h1v1h-1zM276 347h1v1h-1zM279 344h1v1h-1zM287 342h1v1h-1zM278 340h1v1h-1zM269 338h1v1h-1zM277 335h1v1h-1zM277 333h1v1h-1zM277 331h1v1h-1zM273 329h1v1h-1zM271 327h1v1h-1zM267 324h1v1h-1zM267 322h1v1h-1zM266 320h1v1h-1zM265 318h1v1h-1zM265 315h1v1h-1zM264 313h1v1h-1zM264 311h1v1h-1zM263 309h1v1h-1zM263 307h1v1h-1zM263 304h1v1h-1zM263 302h1v1h-1zM264 300h1v1h-1zM264 298h1v1h-1zM263 295h1v1h-1zM263 293h1v1h-1zM263 291h1v1h-1zM262 289h1v1h-1zM261 286h1v1h-1zM261 284h1v1h-1zM262 282h1v1h-1zM262 280h1v1h-1zM263 278h1v1h-1zM263 275h1v1h-1zM264 273h1v1h-1zM265 271h1v1h-1zM267 269h1v1h-1zM267 266h1v1h-1zM269 264h1v1h-1zM269 262h1v1h-1zM269 260h1v1h-1zM270 258h1v1h-1zM271 255h1v1h-1zM270 253h1v1h-1zM270 251h1v1h-1zM270 249h1v1h-1zM270 246h1v1h-1zM270 244h1v1h-1zM270 242h1v1h-1zM270 240h1v1h-1zM270 238h1v1h-1zM269 235h1v1h-1zM269 233h1v1h-1zM268 231h1v1h-1zM268 229h1v1h-1zM268 226h1v1h-1zM267 224h1v1h-1zM267 222h1v1h-1zM267 220h1v1h-1zM267 217h1v1h-1zM267 215h1v1h-1zM267 213h1v1h-1zM265 211h1v1h-1zM265 209h1v1h-1zM264 206h1v1h-1zM264 204h1v1h-1zM263 202h1v1h-1zM262 200h1v1h-1zM263 197h1v1h-1zM263 195h1v1h-1zM264 193h1v1h-1zM266 191h1v1h-1zM267 189h1v1h-1zM267 186h1v1h-1zM265 184h1v1h-1zM265 182h1v1h-1zM265 180h1v1h-1zM265 177h1v1h-1zM265 175h1v1h-1zM265 173h1v1h-1zM268 171h1v1h-1zM268 168h1v1h-1zM271 166h1v1h-1zM273 164h1v1h-1zM273 162h1v1h-1zM275 160h1v1h-1zM275 157h1v1h-1zM274 155h1v1h-1zM273 153h1v1h-1zM275 151h1v1h-1zM277 148h1v1h-1zM275 146h1v1h-1zM273 144h1v1h-1zM272 142h1v1h-1zM271 140h1v1h-1zM271 137h1v1h-1zM270 135h1v1h-1zM269 133h1v1h-1zM269 131h1v1h-1zM271 128h1v1h-1zM271 126h1v1h-1zM272 124h1v1h-1zM273 122h1v1h-1zM275 120h1v1h-1zM275 117h1v1h-1zM277 115h1v1h-1zM277 113h1v1h-1zM277 111h1v1h-1zM277 108h1v1h-1zM279 106h1v1h-1zM278 104h1v1h-1zM277 102h1v1h-1zM277 99h1v1h-1zM275 97h1v1h-1zM275 95h1v1h-1zM275 93h1v1h-1zM273 91h1v1h-1zM273 88h1v1h-1zM274 86h1v1h-1zM275 84h1v1h-1zM275 82h1v1h-1zM273 79h1v1h-1zM273 77h1v1h-1zM274 75h1v1h-1zM275 73h1v1h-1zM271 71h1v1h-1zM270 68h1v1h-1zM269 66h1v1h-1zM268 64h1v1h-1zM269 62h1v1h-1zM269 59h1v1h-1zM269 57h1v1h-1zM267 55h1v1h-1zM267 53h1v1h-1zM265 50h1v1h-1z" fill="#00bfff" shape-rendering="crispEdges"/>
<path d="M535 424h3v1h-3zM536 423h1v3h-1zM535 422h3v1h-3zM536 421h1v3h-1zM535 420h3v1h-3zM536 419h1v3h-1zM535 418h3v1h-3zM536 417h1v3h-1zM535 416h3v1h-3zM536 415h1v3h-1zM535 413h3v1h-3zM536 412h1v3h-1zM535 411h3v1h-3zM536 410h1v3h-1zM535 409h3v1h-3zM536 408h1v3h-1zM535 407h3v1h-3zM536 406h1v3h-1zM535 404h3v1h-3zM536 403h1v3h-1zM525 402h3v1h-3zM526 401h1v3h-1zM515 400h3v1h-3zM516 399h1v3h-1zM505 398h3v1h-3zM506 397h1v3h-1zM489 396h3v1h-3zM490 395h1v3h-1zM482 393h3v1h-3zM483 392h1v3h-1zM479 391h3v1h-3zM480 390h1v3h-1zM482 389h3v1h-3zM483 388h1v3h-1zM482 387h3v1h-3zM483 386h1v3h-1zM485 384h3v1h-3zM486 383h1v3h-1zM499 382h3v1h-3zM500 381h1v3h-1zM509 380h3v1h-3zM510 379h1v3h-1zM512 378h3v1h-3zM513 377h1v3h-1zM512 376h3v1h-3zM513 375h1v3h-1zM515 373h3v1h-3zM516 372h1v3h-1zM522 371h3v1h-3zM523 370h1v3h-1zM522 369h3v1h-3zM523 368h1v3h-1zM522 367h3v1h-3zM523 366h1v3h-1zM525 364h3v1h-3zM526 363h1v3h-1zM525 362h3v1h-3zM526 361h1v3h-1zM525 360h3v1h-3zM526 359h1v3h-1zM528 358h3v1h-3zM529 357h1v3h-1zM522 355h3v1h-3zM523 354h1v3h-1zM518 353h3v1h-3zM519 352h1v3h-1zM515 351h3v1h-3zM516 350h1v3h-1zM515 349h3v1h-3zM516 348h1v3h-1zM525 347h3v1h-3zM526 346h1v3h-1zM535 344h3v1h-3zM536 343h1v3h-1zM515 342h3v1h-3zM516 341h1v3h-1zM495 340h3v1h-3zM496 339h1v3h-1zM495 338h3v1h-3zM496 337h1v3h-1zM499 335h3v1h-3zM500 334h1v3h-1zM502 333h3v1h-3zM503 332h1v3h-1zM518 331h3v1h-3zM519 330h1v3h-1zM528 329h3v1h-3zM529 328h1v3h-1zM535 327h3v1h-3zM536 326h1v3h-1zM528 324h3v1h-3zM529 323h1v3h-1zM528 322h3v1h-3zM529 321h1v3h-1zM532 320h3v1h-3zM533 319h1v3h-1zM522 318h3v1h-3zM523 317h1v3h-1zM512 315h3v1h-3zM513 314h1v3h-1zM512 313h3v1h-3zM513 312h1v3h-1zM512 311h3v1h-3zM513 310h1v3h-1zM515 309h3v1h-3zM516 308h1v3h-1zM522 307h3v1h-3zM523 306h1v3h-1zM525 304h3v1h-3zM526 303h1v3h-1zM532 302h3v1h-3zM533 301h1v3h-1zM528 300h3v1h-3zM529 299h1v3h-1zM528 298h3v1h-3zM529 297h1v3h-1zM535 295h3v1h-3zM536 294h1v3h-1zM532 293h3v1h-3zM533 292h1v3h-1zM499 291h3v1h-3zM500 290h1v3h-1zM452 289h3v1h-3zM453 288h1v3h-1zM446 286h3v1h-3zM447 285h1v3h-1zM419 284h3v1h-3zM420 283h1v3h-1zM426 282h3v1h-3zM427 281h1v3h-1zM419 280h3v1h-3zM420 279h1v3h-1zM436 278h3v1h-3zM437 277h1v3h-1zM455 275h3v1h-3zM456 274h1v3h-1zM455 273h3v1h-3zM456 272h1v3h-1zM462 271h3v1h-3zM463 270h1v3h-1zM429 269h3v1h-3zM430 268h1v3h-1zM402 266h3v1h-3zM403 265h1v3h-1zM406 264h3v1h-3zM407 263h1v3h-1zM406 262h3v1h-3zM407 261h1v3h-1zM452 260h3v1h-3zM453 259h1v3h-1zM472 258h3v1h-3zM473 257h1v3h-1zM485 255h3v1h-3zM486 254h1v3h-1zM495 253h3v1h-3zM496 252h1v3h-1zM495 251h3v1h-3zM496 250h1v3h-1zM462 249h3v1h-3zM463 248h1v3h-1zM426 246h3v1h-3zM427 245h1v3h-1zM426 244h3v1h-3zM427 243h1v3h-1zM422 242h3v1h-3zM423 241h1v3h-1zM409 240h3v1h-3zM410 239h1v3h-1zM389 238h3v1h-3zM390 237h1v3h-1zM389 235h3v1h-3zM390 234h1v3h-1zM386 233h3v1h-3zM387 232h1v3h-1zM399 231h3v1h-3zM400 230h1v3h-1zM406 229h3v1h-3zM407 228h1v3h-1zM429 226h3v1h-3zM430 225h1v3h-1zM475 224h3v1h-3zM476 223h1v3h-1zM479 222h3v1h-3zM480 221h1v3h-1zM475 220h3v1h-3zM476 219h1v3h-1zM475 217h3v1h-3zM476 216h1v3h-1zM475 215h3v1h-3zM476 214h1v3h-1zM472 213h3v1h-3zM473 212h1v3h-1zM522 211h3v1h-3zM523 210h1v3h-1zM535 209h3v1h-3zM536 208h1v3h-1zM532 206h3v1h-3zM533 205h1v3h-1zM532 204h3v1h-3zM533 203h1v3h-1zM535 202h3v1h-3zM536 201h1v3h-1zM535 200h3v1h-3zM536 199h1v3h-1zM535 197h3v1h-3zM536 196h1v3h-1zM535 195h3v1h-3zM536 194h1v3h-1zM515 193h3v1h-3zM516 192h1v3h-1zM492 191h3v1h-3zM493 190h1v3h-1zM455 189h3v1h-3zM456 188h1v3h-1zM422 186h3v1h-3zM423 185h1v3h-1zM396 184h3v1h-3zM397 183h1v3h-1zM406 182h3v1h-3zM407 181h1v3h-1zM376 180h3v1h-3zM377 179h1v3h-1zM392 177h3v1h-3zM393 176h1v3h-1zM389 175h3v1h-3zM390 174h1v3h-1zM382 173h3v1h-3zM383 172h1v3h-1zM409 171h3v1h-3zM410 170h1v3h-1zM422 168h3v1h-3zM423 167h1v3h-1zM436 166h3v1h-3zM437 165h1v3h-1zM446 164h3v1h-3zM447 163h1v3h-1zM465 162h3v1h-3zM466 161h1v3h-1zM465 160h3v1h-3zM466 159h1v3h-1zM475 157h3v1h-3zM476 156h1v3h-1zM479 155h3v1h-3zM480 154h1v3h-1zM505 153h3v1h-3zM506 152h1v3h-1zM495 151h3v1h-3zM496 150h1v3h-1zM485 148h3v1h-3zM486 147h1v3h-1zM459 146h3v1h-3zM460 145h1v3h-1zM472 144h3v1h-3zM473 143h1v3h-1zM439 142h3v1h-3zM440 141h1v3h-1zM432 140h3v1h-3zM433 139h1v3h-1zM419 137h3v1h-3zM420 136h1v3h-1zM392 135h3v1h-3zM393 134h1v3h-1zM392 133h3v1h-3zM393 132h1v3h-1zM373 131h3v1h-3zM374 130h1v3h-1zM376 128h3v1h-3zM377 127h1v3h-1zM379 126h3v1h-3zM380 125h1v3h-1zM386 124h3v1h-3zM387 123h1v3h-1zM389 122h3v1h-3zM390 121h1v3h-1zM402 120h3v1h-3zM403 119h1v3h-1zM406 117h3v1h-3zM407 116h1v3h-1zM416 115h3v1h-3zM417 114h1v3h-1zM452 113h3v1h-3zM453 112h1v3h-1zM452 111h3v1h-3zM453 110h1v3h-1zM455 108h3v1h-3zM456 107h1v3h-1zM469 106h3v1h-3zM470 105h1v3h-1zM479 104h3v1h-3zM480 103h1v3h-1zM482 102h3v1h-3zM483 101h1v3h-1zM489 99h3v1h-3zM490 98h1v3h-1zM495 97h3v1h-3zM496 96h1v3h-1zM495 95h3v1h-3zM496 94h1v3h-1zM499 93h3v1h-3zM500 92h1v3h-1zM505 91h3v1h-3zM506 90h1v3h-1zM499 88h3v1h-3zM500 87h1v3h-1zM489 86h3v1h-3zM490 85h1v3h-1zM475 84h3v1h-3zM476 83h1v3h-1zM479 82h3v1h-3zM480 81h1v3h-1zM459 79h3v1h-3zM460 78h1v3h-1zM449 77h3v1h-3zM450 76h1v3h-1zM442 75h3v1h-3zM443 74h1v3h-1zM446 73h3v1h-3zM447 72h1v3h-1zM449 71h3v1h-3zM450 70h1v3h-1zM455 68h3v1h-3zM456 67h1v3h-1zM515 66h3v1h-3zM516 65h1v3h-1zM528 64h3v1h-3zM529 63h1v3h-1zM532 62h3v1h-3zM533 61h1v3h-1zM528 59h3v1h-3zM529 58h1v3h-1zM535 57h3v1h-3zM536 56h1v3h-1zM535 55h3v1h-3zM536 54h1v3h-1zM535 53h3v1h-3zM536 52h1v3h-1zM535 50h3v1h-3zM536 49h1v3h-1z" fill="#d2691e" fill-opacity=".5" shape-rendering="crispEdges"/>
<path d="M536 424h1v1h-1zM536 422h1v1h-1zM536 420h1v1h-1zM536 418h1v1h-1zM536 416h1v1h-1zM536 413h1v1h-1zM536 411h1v1h-1zM536 409h1v1h-1zM536 407h1v1h-1zM536 404h1v1h-1zM526 402h1v1h-1zM516 400h1v1h-1zM506 398h1v1h-1zM490 396h1v1h-1zM483 393h1v1h-1zM480 391h1v1h-1zM483 389h1v1h-1zM483 387h1v1h-1zM486 384h1v1h-1zM500 382h1v1h-1zM510 380h1v1h-1zM513 378h1v1h-1zM513 376h1v1h-1zM516 373h1v1h-1zM523 371h1v1h-1zM523 369h1v1h-1zM523 367h1v1h-1zM526 364h1v1h-1zM526 362h1v1h-1zM526 360h1v1h-1zM529 358h1v1h-1zM523 355h1v1h-1zM519 353h1v1h-1zM516 351h1v1h-1zM516 349h1v1h-1zM526 347h1v1h-1zM536 344h1v1h-1zM516 342h1v1h-1zM496 340h1v1h-1zM496 338h1v1h-1zM500 335h1v1h-1zM503 333h1v1h-1zM519 331h1v1h-1zM529 329h1v1h-1zM536 327h1v1h-1zM529 324h1v1h-1zM529 322h1v1h-1zM533 320h1v1h-1zM523 318h1v1h-1zM513 315h1v1h-1zM513 313h1v1h-1zM513 311h1v1h-1zM516 309h1v1h-1zM523 307h1v1h-1zM526 304h1v1h-1zM533 302h1v1h-1zM529 300h1v1h-1zM529 298h1v1h-1zM536 295h1v1h-1zM533 293h1v1h-1zM500 291h1v1h-1zM453 289h1v1h-1zM447 286h1v1h-1zM420 284h1v1h-1zM427 282h1v1h-1zM420 280h1v1h-1zM437 278h1v1h-1zM456 275h1v1h-1zM456 273h1v1h-1zM463 271h1v1h-1zM430 269h1v1h-1zM403 266h1v1h-1zM407 264h1v1h-1zM407 262h1v1h-1zM453 260h1v1h-1zM473 258h1v1h-1zM486 255h1v1h-1zM496 253h1v1h-1zM496 251h1v1h-1zM463 249h1v1h-1zM427 246h1v1h-1zM427 244h1v1h-1zM423 242h1v1h-1zM410 240h1v1h-1zM390 238h1v1h-1zM390 235h1v1h-1zM387 233h1v1h-1zM400 231h1v1h-1zM407 229h1v1h-1zM430 226h1v1h-1zM476 224h1v1h-1zM480 222h1v1h-1zM476 220h1v1h-1zM476 217h1v1h-1zM476 215h1v1h-1zM473 213h1v1h-1zM523 211h1v1h-1zM536 209h1v1h-1zM533 206h1v1h-1zM533 204h1v1h-1zM536 202h1v1h-1zM536 200h1v1h-1zM536 197h1v1h-1zM536 195h1v1h-1zM516 193h1v1h-1zM493 191h1v1h-1zM456 189h1v1h-1zM423 186h1v1h-1zM397 184h1v1h-1zM407 182h1v1h-1zM377 180h1v1h-1zM393 177h1v1h-1zM390 175h1v1h-1zM383 173h1v1h-1zM410 171h1v1h-1zM423 168h1v1h-1zM437 166h1v1h-1zM447 164h1v1h-1zM466 162h1v1h-1zM466 160h1v1h-1zM476 157h1v1h-1zM480 155h1v1h-1zM506 153h1v1h-1zM496 151h1v1h-1zM486 148h1v1h-1zM460 146h1v1h-1zM473 144h1v1h-1zM440 142h1v1h-1zM433 140h1v1h-1zM420 137h1v1h-1zM393 135h1v1h-1zM393 133h1v1h-1zM374 131h1v1h-1zM377 128h1v1h-1zM380 126h1v1h-1zM387 124h1v1h-1zM390 122h1v1h-1zM403 120h1v1h-1zM407 117h1v1h-1zM417 115h1v1h-1zM453 113h1v1h-1zM453 111h1v1h-1zM456 108h1v1h-1zM470 106h1v1h-1zM480 104h1v1h-1zM483 102h1v1h-1zM490 99h1v1h-1zM496 97h1v1h-1zM496 95h1v1h-1zM500 93h1v1h-1zM506 91h1v1h-1zM500 88h1v1h-1zM490 86h1v1h-1zM476 84h1v1h-1zM480 82h1v1h-1zM460 79h1v1h-1zM450 77h1v1h-1zM443 75h1v1h-1zM447 73h1v1h-1zM450 71h1v1h-1zM456 68h1v1h-1zM516 66h1v1h-1zM529 64h1v1h-1zM533 62h1v1h-1zM529 59h1v1h-1zM536 57h1v1h-1zM536 55h1v1h-1zM536 53h1v1h-1zM536 50h1v1h-1z" fill="#d2691e" shape-rendering="crispEdges"/>
<path d="M382 424h3v1h-3zM383 423h1v3h-1zM382 422h3v1h-3zM383 421h1v3h-1zM382 420h3v1h-3zM383 419h1v3h-1zM381 418h3v1h-3zM382 417h1v3h-1zM381 416h3v1h-3zM382 415h1v3h-1zM382 413h3v1h-3zM383 412h1v3h-1zM381 411h3v1h-3zM382 410h1v3h-1zM381 409h3v1h-3zM382 408h1v3h-1zM382 407h3v1h-3zM383 406h1v3h-1zM384 404h3v1h-3zM385 403h1v3h-1zM388 402h3v1h-3zM389 401h1v3h-1zM393 400h3v1h-3zM394 399h1v3h-1zM398 398h3v1h-3zM399 397h1v3h-1zM404 396h3v1h-3zM405 395h1v3h-1zM407 393h3v1h-3zM408 392h1v3h-1zM409 391h3v1h-3zM410 390h1v3h-1zM408 389h3v1h-3zM409 388h1v3h-1zM408 387h3v1h-3zM409 386h1v3h-1zM406 384h3v1h-3zM407 383h1v3h-1zM404 382h3v1h-3zM405 381h1v3h-1zM401 380h3v1h-3zM402 379h1v3h-1zM398 378h3v1h-3zM399 377h1v3h-1zM395 376h3v1h-3zM396 375h1v3h-1zM392 373h3v1h-3zM393 372h1v3h-1zM393 371h3v1h-3zM394 370h1v3h-1zM393 369h3v1h-3zM394 368h1v3h-1zM392 367h3v1h-3zM393 366h1v3h-1zM392 364h3v1h-3zM393 363h1v3h-1zM392 362h3v1h-3zM393 361h1v3h-1zM390 360h3v1h-3zM391 359h1v3h-1zM391 358h3v1h-3zM392 357h1v3h-1zM392 355h3v1h-3zM393 354h1v3h-1zM393 353h3v1h-3zM394 352h1v3h-1zM395 351h3v1h-3zM396 350h1v3h-1zM398 349h3v1h-3zM399 348h1v3h-1zM399 347h3v1h-3zM400 346h1v3h-1zM400 344h3v1h-3zM401 343h1v3h-1zM411 342h3v1h-3zM412 341h1v3h-1zM416 340h3v1h-3zM417 339h1v3h-1zM420 338h3v1h-3zM421 337h1v3h-1zM423 335h3v1h-3zM424 334h1v3h-1zM423 333h3v1h-3zM424 332h1v3h-1zM414 331h3v1h-3zM415 330h1v3h-1zM412 329h3v1h-3zM413 328h1v3h-1zM411 327h3v1h-3zM412 326h1v3h-1zM413 324h3v1h-3zM414 323h1v3h-1zM415 322h3v1h-3zM416 321h1v3h-1zM416 320h3v1h-3zM417 319h1v3h-1zM418 318h3v1h-3zM419 317h1v3h-1zM420 315h3v1h-3zM421 314h1v3h-1zM421 313h3v1h-3zM422 312h1v3h-1zM421 311h3v1h-3zM422 310h1v3h-1zM423 309h3v1h-3zM424 308h1v3h-1zM421 307h3v1h-3zM422 306h1v3h-1zM421 304h3v1h-3zM422 303h1v3h-1zM420 302h3v1h-3zM421 301h1v3h-1zM414 300h3v1h-3zM415 299h1v3h-1zM414 298h3v1h-3zM415 297h1v3h-1zM413 295h3v1h-3zM414 294h1v3h-1zM413 293h3v1h-3zM414 292h1v3h-1zM436 291h3v1h-3zM437 290h1v3h-1zM454 289h3v1h-3zM455 288h1v3h-1zM459 286h3v1h-3zM460 285h1v3h-1zM465 284h3v1h-3zM466 283h1v3h-1zM462 282h3v1h-3zM463 281h1v3h-1zM458 280h3v1h-3zM459 279h1v3h-1zM443 278h3v1h-3zM444 277h1v3h-1zM439 275h3v1h-3zM440 274h1v3h-1zM437 273h3v1h-3zM438 272h1v3h-1zM435 271h3v1h-3zM436 270h1v3h-1zM435 269h3v1h-3zM436 268h1v3h-1zM433 266h3v1h-3zM434 265h1v3h-1zM430 264h3v1h-3zM431 263h1v3h-1zM423 262h3v1h-3zM424 261h1v3h-1zM418 260h3v1h-3zM419 259h1v3h-1zM413 258h3v1h-3zM414 257h1v3h-1zM408 255h3v1h-3zM409 254h1v3h-1zM406 253h3v1h-3zM407 252h1v3h-1zM408 251h3v1h-3zM409 250h1v3h-1zM413 249h3v1h-3zM414 248h1v3h-1zM421 246h3v1h-3zM422 245h1v3h-1zM426 244h3v1h-3zM427 243h1v3h-1zM423 242h3v1h-3zM424 241h1v3h-1zM440 240h3v1h-3zM441 239h1v3h-1zM452 238h3v1h-3zM453 237h1v3h-1zM455 235h3v1h-3zM456 234h1v3h-1zM448 233h3v1h-3zM449 232h1v3h-1zM431 231h3v1h-3zM432 230h1v3h-1zM415 229h3v1h-3zM416 228h1v3h-1zM415 226h3v1h-3zM416 225h1v3h-1zM414 224h3v1h-3zM415 223h1v3h-1zM414 222h3v1h-3zM415 221h1v3h-1zM413 220h3v1h-3zM414 219h1v3h-1zM413 217h3v1h-3zM414 216h1v3h-1zM412 215h3v1h-3zM413 214h1v3h-1zM411 213h3v1h-3zM412 212h1v3h-1zM404 211h3v1h-3zM405 210h1v3h-1zM401 209h3v1h-3zM402 208h1v3h-1zM395 206h3v1h-3zM396 205h1v3h-1zM394 204h3v1h-3zM395 203h1v3h-1zM393 202h3v1h-3zM394 201h1v3h-1zM395 200h3v1h-3zM396 199h1v3h-1zM398 197h3v1h-3zM399 196h1v3h-1zM400 195h3v1h-3zM401 194h1v3h-1zM416 193h3v1h-3zM417 192h1v3h-1zM421 191h3v1h-3zM422 190h1v3h-1zM428 189h3v1h-3zM429 188h1v3h-1zM441 186h3v1h-3zM442 185h1v3h-1zM448 184h3v1h-3zM449 183h1v3h-1zM450 182h3v1h-3zM451 181h1v3h-1zM452 180h3v1h-3zM453 179h1v3h-1zM449 177h3v1h-3zM450 176h1v3h-1zM447 175h3v1h-3zM448 174h1v3h-1zM445 173h3v1h-3zM446 172h1v3h-1zM441 171h3v1h-3zM442 170h1v3h-1zM438 168h3v1h-3zM439 167h1v3h-1zM433 166h3v1h-3zM434 165h1v3h-1zM430 164h3v1h-3zM431 163h1v3h-1zM426 162h3v1h-3zM427 161h1v3h-1zM421 160h3v1h-3zM422 159h1v3h-1zM413 157h3v1h-3zM414 156h1v3h-1zM408 155h3v1h-3zM409 154h1v3h-1zM408 153h3v1h-3zM409 152h1v3h-1zM406 151h3v1h-3zM407 150h1v3h-1zM407 148h3v1h-3zM408 147h1v3h-1zM407 146h3v1h-3zM408 145h1v3h-1zM406 144h3v1h-3zM407 143h1v3h-1zM410 142h3v1h-3zM411 141h1v3h-1zM411 140h3v1h-3zM412 139h1v3h-1zM418 137h3v1h-3zM419 136h1v3h-1zM427 135h3v1h-3zM428 134h1v3h-1zM425 133h3v1h-3zM426 132h1v3h-1zM433 131h3v1h-3zM434 130h1v3h-1zM440 128h3v1h-3zM441 127h1v3h-1zM447 126h3v1h-3zM448 125h1v3h-1zM445 124h3v1h-3zM446 123h1v3h-1zM436 122h3v1h-3zM437 121h1v3h-1zM428 120h3v1h-3zM429 119h1v3h-1zM423 117h3v1h-3zM424 116h1v3h-1zM416 115h3v1h-3zM417 114h1v3h-1zM412 113h3v1h-3zM413 112h1v3h-1zM410 111h3v1h-3zM411 110h1v3h-1zM406 108h3v1h-3zM407 107h1v3h-1zM400 106h3v1h-3zM401 105h1v3h-1zM400 104h3v1h-3zM401 103h1v3h-1zM399 102h3v1h-3zM400 101h1v3h-1zM400 99h3v1h-3zM401 98h1v3h-1zM400 97h3v1h-3zM401 96h1v3h-1zM399 95h3v1h-3zM400 94h1v3h-1zM399 93h3v1h-3zM400 92h1v3h-1zM398 91h3v1h-3zM399 90h1v3h-1zM401 88h3v1h-3zM402 87h1v3h-1zM406 86h3v1h-3zM407 85h1v3h-1zM410 84h3v1h-3zM411 83h1v3h-1zM411 82h3v1h-3zM412 81h1v3h-1zM420 79h3v1h-3zM421 78h1v3h-1zM426 77h3v1h-3zM427 76h1v3h-1zM425 75h3v1h-3zM426 74h1v3h-1zM433 73h3v1h-3zM434 72h1v3h-1zM426 71h3v1h-3zM427 70h1v3h-1zM423 68h3v1h-3zM424 67h1v3h-1zM403 66h3v1h-3zM404 65h1v3h-1zM400 64h3v1h-3zM401 63h1v3h-1zM401 62h3v1h-3zM402 61h1v3h-1zM411 59h3v1h-3zM412 58h1v3h-1zM399 57h3v1h-3zM400 56h1v3h-1zM398 55h3v1h-3zM399 54h1v3h-1zM396 53h3v1h-3zM397 52h1v3h-1zM401 50h3v1h-3zM402 49h1v3h-1z" fill="#a52a2a" fill-opacity=".5" shape-rendering="crispEdges"/>
<path d="M383 424h1v1h-1zM383 422h1v1h-1zM383 420h1v1h-1zM382 418h1v1h-1zM382 416h1v1h-1zM383 413h1v1h-1zM382 411h1v1h-1zM382 409h1v1h-1zM383 407h1v1h-1zM385 404h1v1h-1zM389 402h1v1h-1zM394 400h1v1h-1zM399 398h1v1h-1zM405 396h1v1h-1zM408 393h1v1h-1zM410 391h1v1h-1zM409 389h1v1h-1zM409 387h1v1h-1zM407 384h1v1h-1zM405 382h1v1h-1zM402 380h1v1h-1zM399 378h1v1h-1zM396 376h1v1h-1zM393 373h1v1h-1zM394 371h1v1h-1zM394 369h1v1h-1zM393 367h1v1h-1zM393 364h1v1h-1zM393 362h1v1h-1zM391 360h1v1h-1zM392 358h1v1h-1zM393 355h1v1h-1zM394 353h1v1h-1zM396 351h1v1h-1zM399 349h1v1h-1zM400 347h1v1h-1zM401 344h1v1h-1zM412 342h1v1h-1zM417 340h1v1h-1zM421 338h1v1h-1zM424 335h1v1h-1zM424 333h1v1h-1zM415 331h1v1h-1zM413 329h1v1h-1zM412 327h1v1h-1zM414 324h1v1h-1zM416 322h1v1h-1zM417 320h1v1h-1zM419 318h1v1h-1zM421 315h1v1h-1zM422 313h1v1h-1zM422 311h1v1h-1zM424 309h1v1h-1zM422 307h1v1h-1zM422 304h1v1h-1zM421 302h1v1h-1zM415 300h1v1h-1zM415 298h1v1h-1zM414 295h1v1h-1zM414 293h1v1h-1zM437 291h1v1h-1zM455 289h1v1h-1zM460 286h1v1h-1zM466 284h1v1h-1zM463 282h1v1h-1zM459 280h1v1h-1zM444 278h1v1h-1zM440 275h1v1h-1zM438 273h1v1h-1zM436 271h1v1h-1zM436 269h1v1h-1zM434 266h1v1h-1zM431 264h1v1h-1zM424 262h1v1h-1zM419 260h1v1h-1zM414 258h1v1h-1zM409 255h1v1h-1zM407 253h1v1h-1zM409 251h1v1h-1zM414 249h1v1h-1zM422 246h1v1h-1zM427 244h1v1h-1zM424 242h1v1h-1zM441 240h1v1h-1zM453 238h1v1h-1zM456 235h1v1h-1zM449 233h1v1h-1zM432 231h1v1h-1zM416 229h1v1h-1zM416 226h1v1h-1zM415 224h1v1h-1zM415 222h1v1h-1zM414 220h1v1h-1zM414 217h1v1h-1zM413 215h1v1h-1zM412 213h1v1h-1zM405 211h1v1h-1zM402 209h1v1h-1zM396 206h1v1h-1zM395 204h1v1h-1zM394 202h1v1h-1zM396 200h1v1h-1zM399 197h1v1h-1zM401 195h1v1h-1zM417 193h1v1h-1zM422 191h1v1h-1zM429 189h1v1h-1zM442 186h1v1h-1zM449 184h1v1h-1zM451 182h1v1h-1zM453 180h1v1h-1zM450 177h1v1h-1zM448 175h1v1h-1zM446 173h1v1h-1zM442 171h1v1h-1zM439 168h1v1h-1zM434 166h1v1h-1zM431 164h1v1h-1zM427 162h1v1h-1zM422 160h1v1h-1zM414 157h1v1h-1zM409 155h1v1h-1zM409 153h1v1h-1zM407 151h1v1h-1zM408 148h1v1h-1zM408 146h1v1h-1zM407 144h1v1h-1zM411 142h1v1h-1zM412 140h1v1h-1zM419 137h1v1h-1zM428 135h1v1h-1zM426 133h1v1h-1zM434 131h1v1h-1zM441 128h1v1h-1zM448 126h1v1h-1zM446 124h1v1h-1zM437 122h1v1h-1zM429 120h1v1h-1zM424 117h1v1h-1zM417 115h1v1h-1zM413 113h1v1h-1zM411 111h1v1h-1zM407 108h1v1h-1zM401 106h1v1h-1zM401 104h1v1h-1zM400 102h1v1h-1zM401 99h1v1h-1zM401 97h1v1h-1zM400 95h1v1h-1zM400 93h1v1h-1zM399 91h1v1h-1zM402 88h1v1h-1zM407 86h1v1h-1zM411 84h1v1h-1zM412 82h1v1h-1zM421 79h1v1h-1zM427 77h1v1h-1zM426 75h1v1h-1zM434 73h1v1h-1zM427 71h1v1h-1zM424 68h1v1h-1zM404 66h1v1h-1zM401 64h1v1h-1zM402 62h1v1h-1zM412 59h1v1h-1zM400 57h1v1h-1zM399 55h1v1h-1zM397 53h1v1h-1zM402 50h1v1h-1z" fill="#a52a2a" shape-rendering="crispEdges"/>
<path d="M220 424h3v1h-3zM221 423h1v3h-1zM220 422h3v1h-3zM221 421h1v3h-1zM220 420h3v1h-3zM221 419h1v3h-1zM220 418h3v1h-3zM221 417h1v3h-1zM220 416h3v1h-3zM221 415h1v3h-1zM222 413h3v1h-3zM223 412h1v3h-1zM222 411h3v1h-3zM223 410h1v3h-1zM227 409h3v1h-3zM228 408h1v3h-1zM227 407h3v1h-3zM228 406h1v3h-1zM228 404h3v1h-3zM229 403h1v3h-1zM227 402h3v1h-3zM228 401h1v3h-1zM227 400h3v1h-3zM228 399h1v3h-1zM225 398h3v1h-3zM226 397h1v3h-1zM225 396h3v1h-3zM226 395h1v3h-1zM225 393h3v1h-3zM226 392h1v3h-1zM223 391h3v1h-3zM224 390h1v3h-1zM227 389h3v1h-3zM228 388h1v3h-1zM232 387h3v1h-3zM233 386h1v3h-1zM230 384h3v1h-3zM231 383h1v3h-1zM228 382h3v1h-3zM229 381h1v3h-1zM242 380h3v1h-3zM243 379h1v3h-1zM227 378h3v1h-3zM228 377h1v3h-1zM225 376h3v1h-3zM226 375h1v3h-1zM227 373h3v1h-3zM228 372h1v3h-1zM227 371h3v1h-3zM228 370h1v3h-1zM235 369h3v1h-3zM236 368h1v3h-1zM246 367h3v1h-3zM247 366h1v3h-1zM235 364h3v1h-3zM236 363h1v3h-1zM232 362h3v1h-3zM233 361h1v3h-1zM233 360h3v1h-3zM234 359h1v3h-1zM232 358h3v1h-3zM233 357h1v3h-1zM230 355h3v1h-3zM231 354h1v3h-1zM232 353h3v1h-3zM233 352h1v3h-1zM232 351h3v1h-3zM233 350h1v3h-1zM233 349h3v1h-3zM234 348h1v3h-1zM235 347h3v1h-3zM236 346h1v3h-1zM238 344h3v1h-3zM239 343h1v3h-1zM238 342h3v1h-3zM239 341h1v3h-1zM240 340h3v1h-3zM241 339h1v3h-1zM242 338h3v1h-3zM243 337h1v3h-1zM238 335h3v1h-3zM239 334h1v3h-1zM243 333h3v1h-3zM244 332h1v3h-1zM233 331h3v1h-3zM234 330h1v3h-1zM232 329h3v1h-3zM233 328h1v3h-1zM230 327h3v1h-3zM231 326h1v3h-1zM228 324h3v1h-3zM229 323h1v3h-1zM225 322h3v1h-3zM226 321h1v3h-1zM225 320h3v1h-3zM226 319h1v3h-1zM223 318h3v1h-3zM224 317h1v3h-1zM220 315h3v1h-3zM221 314h1v3h-1zM220 313h3v1h-3zM221 312h1v3h-1zM218 311h3v1h-3zM219 310h1v3h-1zM218 309h3v1h-3zM219 308h1v3h-1zM218 307h3v1h-3zM219 306h1v3h-1zM217 304h3v1h-3zM218 303h1v3h-1zM215 302h3v1h-3zM216 301h1v3h-1zM215 300h3v1h-3zM216 299h1v3h-1zM215 298h3v1h-3zM216 297h1v3h-1zM215 295h3v1h-3zM216 294h1v3h-1zM220 293h3v1h-3zM221 292h1v3h-1zM220 291h3v1h-3zM221 290h1v3h-1zM218 289h3v1h-3zM219 288h1v3h-1zM218 286h3v1h-3zM219 285h1v3h-1zM217 284h3v1h-3zM218 283h1v3h-1zM217 282h3v1h-3zM218 281h1v3h-1zM218 280h3v1h-3zM219 279h1v3h-1zM220 278h3v1h-3zM221 277h1v3h-1zM222 275h3v1h-3zM223 274h1v3h-1zM222 273h3v1h-3zM223 272h1v3h-1zM228 271h3v1h-3zM229 270h1v3h-1zM237 269h3v1h-3zM238 268h1v3h-1zM227 266h3v1h-3zM228 265h1v3h-1zM227 264h3v1h-3zM228 263h1v3h-1zM228 262h3v1h-3zM229 261h1v3h-1zM228 260h3v1h-3zM229 259h1v3h-1zM228 258h3v1h-3zM229 257h1v3h-1zM228 255h3v1h-3zM229 254h1v3h-1zM228 253h3v1h-3zM229 252h1v3h-1zM228 251h3v1h-3zM229 250h1v3h-1zM228 249h3v1h-3zM229 248h1v3h-1zM227 246h3v1h-3zM228 245h1v3h-1zM225 244h3v1h-3zM226 243h1v3h-1zM227 242h3v1h-3zM228 241h1v3h-1zM227 240h3v1h-3zM228 239h1v3h-1zM230 238h3v1h-3zM231 237h1v3h-1zM233 235h3v1h-3zM234 234h1v3h-1zM237 233h3v1h-3zM238 232h1v3h-1zM233 231h3v1h-3zM234 230h1v3h-1zM227 229h3v1h-3zM228 228h1v3h-1zM227 226h3v1h-3zM228 225h1v3h-1zM225 224h3v1h-3zM226 223h1v3h-1zM223 222h3v1h-3zM224 221h1v3h-1zM223 220h3v1h-3zM224 219h1v3h-1zM222 217h3v1h-3zM223 216h1v3h-1zM220 215h3v1h-3zM221 214h1v3h-1zM220 213h3v1h-3zM221 212h1v3h-1zM218 211h3v1h-3zM219 210h1v3h-1zM217 209h3v1h-3zM218 208h1v3h-1zM217 206h3v1h-3zM218 205h1v3h-1zM218 204h3v1h-3zM219 203h1v3h-1zM218 202h3v1h-3zM219 201h1v3h-1zM218 200h3v1h-3zM219 199h1v3h-1zM220 197h3v1h-3zM221 196h1v3h-1zM220 195h3v1h-3zM221 194h1v3h-1zM223 193h3v1h-3zM224 192h1v3h-1zM223 191h3v1h-3zM224 190h1v3h-1zM225 189h3v1h-3zM226 188h1v3h-1zM223 186h3v1h-3zM224 185h1v3h-1zM223 184h3v1h-3zM224 183h1v3h-1zM225 182h3v1h-3zM226 181h1v3h-1zM223 180h3v1h-3zM224 179h1v3h-1zM223 177h3v1h-3zM224 176h1v3h-1zM220 175h3v1h-3zM221 174h1v3h-1zM222 173h3v1h-3zM223 172h1v3h-1zM222 171h3v1h-3zM223 170h1v3h-1zM223 168h3v1h-3zM224 167h1v3h-1zM227 166h3v1h-3zM228 165h1v3h-1zM228 164h3v1h-3zM229 163h1v3h-1zM230 162h3v1h-3zM231 161h1v3h-1zM233 160h3v1h-3zM234 159h1v3h-1zM235 157h3v1h-3zM236 156h1v3h-1zM235 155h3v1h-3zM236 154h1v3h-1zM238 153h3v1h-3zM239 152h1v3h-1zM237 151h3v1h-3zM238 150h1v3h-1zM232 148h3v1h-3zM233 147h1v3h-1zM228 146h3v1h-3zM229 145h1v3h-1zM227 144h3v1h-3zM228 143h1v3h-1zM223 142h3v1h-3zM224 141h1v3h-1zM223 140h3v1h-3zM224 139h1v3h-1zM222 137h3v1h-3zM223 136h1v3h-1zM222 135h3v1h-3zM223 134h1v3h-1zM222 133h3v1h-3zM223 132h1v3h-1zM220 131h3v1h-3zM221 130h1v3h-1zM222 128h3v1h-3zM223 127h1v3h-1zM222 126h3v1h-3zM223 125h1v3h-1zM222 124h3v1h-3zM223 123h1v3h-1zM222 122h3v1h-3zM223 121h1v3h-1zM225 120h3v1h-3zM226 119h1v3h-1zM227 117h3v1h-3zM228 116h1v3h-1zM228 115h3v1h-3zM229 114h1v3h-1zM228 113h3v1h-3zM229 112h1v3h-1zM230 111h3v1h-3zM231 110h1v3h-1zM223 108h3v1h-3zM224 107h1v3h-1zM222 106h3v1h-3zM223 105h1v3h-1zM222 104h3v1h-3zM223 103h1v3h-1zM222 102h3v1h-3zM223 101h1v3h-1zM225 99h3v1h-3zM226 98h1v3h-1zM225 97h3v1h-3zM226 96h1v3h-1zM227 95h3v1h-3zM228 94h1v3h-1zM225 93h3v1h-3zM226 92h1v3h-1zM225 91h3v1h-3zM226 90h1v3h-1zM223 88h3v1h-3zM224 87h1v3h-1zM222 86h3v1h-3zM223 85h1v3h-1zM223 84h3v1h-3zM224 83h1v3h-1zM225 82h3v1h-3zM226 81h1v3h-1zM227 79h3v1h-3zM228 78h1v3h-1zM227 77h3v1h-3zM228 76h1v3h-1zM228 75h3v1h-3zM229 74h1v3h-1zM225 73h3v1h-3zM226 72h1v3h-1zM223 71h3v1h-3zM224 70h1v3h-1zM223 68h3v1h-3zM224 67h1v3h-1zM223 66h3v1h-3zM224 65h1v3h-1zM223 64h3v1h-3zM224 63h1v3h-1zM227 62h3v1h-3zM228 61h1v3h-1zM225 59h3v1h-3zM226 58h1v3h-1zM223 57h3v1h-3zM224 56h1v3h-1zM222 55h3v1h-3zM223 54h1v3h-1zM220 53h3v1h-3zM221 52h1v3h-1zM218 50h3v1h-3zM219 49h1v3h-1z" fill="#0000ff" fill-opacity=".5" shape-rendering="crispEdges"/>
<path d="M221 424h1v1h-1zM221 422h1v1h-1zM221 420h1v1h-1zM221 418h1v1h-1zM221 416h1v1h-1zM223 413h1v1h-1zM223 411h1v1h-1zM228 409h1v1h-1zM228 407h1v1h-1zM229 404h1v1h-1zM228 402h1v1h-1zM228 400h1v1h-1zM226 398h1v1h-1zM226 396h1v1h-1zM226 393h1v1h-1zM224 391h1v1h-1zM228 389h1v1h-1zM233 387h1v1h-1zM231 384h1v1h-1zM229 382h1v1h-1zM243 380h1v1h-1zM228 378h1v1h-1zM226 376h1v1h-1zM228 373h1v1h-1zM228 371h1v1h-1zM236 369h1v1h-1zM247 367h1v1h-1zM236 364h1v1h-1zM233 362h1v1h-1zM234 360h1v1h-1zM233 358h1v1h-1zM231 355h1v1h-1zM233 353h1v1h-1zM233 351h1v1h-1zM234 349h1v1h-1zM236 347h1v1h-1zM239 344h1v1h-1zM239 342h1v1h-1zM241 340h1v1h-1zM243 338h1v1h-1zM239 335h1v1h-1zM244 333h1v1h-1zM234 331h1v1h-1zM233 329h1v1h-1zM231 327h1v1h-1zM229 324h1v1h-1zM226 322h1v1h-1zM226 320h1v1h-1zM224 318h1v1h-1zM221 315h1v1h-1zM221 313h1v1h-1zM219 311h1v1h-1zM219 309h1v1h-1zM219 307h1v1h-1zM218 304h1v1h-1zM216 302h1v1h-1zM216 300h1v1h-1zM216 298h1v1h-1zM216 295h1v1h-1zM221 293h1v1h-1zM221 291h1v1h-1zM219 289h1v1h-1zM219 286h1v1h-1zM218 284h1v1h-1zM218 282h1v1h-1zM219 280h1v1h-1zM221 278h1v1h-1zM223 275h1v1h-1zM223 273h1v1h-1zM229 271h1v1h-1zM238 269h1v1h-1zM228 266h1v1h-1zM228 264h1v1h-1zM229 262h1v1h-1zM229 260h1v1h-1zM229 258h1v1h-1zM229 255h1v1h-1zM229 253h1v1h-1zM229 251h1v1h-1zM229 249h1v1h-1zM228 246h1v1h-1zM226 244h1v1h-1zM228 242h1v1h-1zM228 240h1v1h-1zM231 238h1v1h-1zM234 235h1v1h-1zM238 233h1v1h-1zM234 231h1v1h-1zM228 229h1v1h-1zM228 226h1v1h-1zM226 224h1v1h-1zM224 222h1v1h-1zM224 220h1v1h-1zM223 217h1v1h-1zM221 215h1v1h-1zM221 213h1v1h-1zM219 211h1v1h-1zM218 209h1v1h-1zM218 206h1v1h-1zM219 204h1v1h-1zM219 202h1v1h-1zM219 200h1v1h-1zM221 197h1v1h-1zM221 195h1v1h-1zM224 193h1v1h-1zM224 191h1v1h-1zM226 189h1v1h-1zM224 186h1v1h-1zM224 184h1v1h-1zM226 182h1v1h-1zM224 180h1v1h-1zM224 177h1v1h-1zM221 175h1v1h-1zM223 173h1v1h-1zM223 171h1v1h-1zM224 168h1v1h-1zM228 166h1v1h-1zM229 164h1v1h-1zM231 162h1v1h-1zM234 160h1v1h-1zM236 157h1v1h-1zM236 155h1v1h-1zM239 153h1v1h-1zM238 151h1v1h-1zM233 148h1v1h-1zM229 146h1v1h-1zM228 144h1v1h-1zM224 142h1v1h-1zM224 140h1v1h-1zM223 137h1v1h-1zM223 135h1v1h-1zM223 133h1v1h-1zM221 131h1v1h-1zM223 128h1v1h-1zM223 126h1v1h-1zM223 124h1v1h-1zM223 122h1v1h-1zM226 120h1v1h-1zM228 117h1v1h-1zM229 115h1v1h-1zM229 113h1v1h-1zM231 111h1v1h-1zM224 108h1v1h-1zM223 106h1v1h-1zM223 104h1v1h-1zM223 102h1v1h-1zM226 99h1v1h-1zM226 97h1v1h-1zM228 95h1v1h-1zM226 93h1v1h-1zM226 91h1v1h-1zM224 88h1v1h-1zM223 86h1v1h-1zM224 84h1v1h-1zM226 82h1v1h-1zM228 79h1v1h-1zM228 77h1v1h-1zM229 75h1v1h-1zM226 73h1v1h-1zM224 71h1v1h-1zM224 68h1v1h-1zM224 66h1v1h-1zM224 64h1v1h-1zM228 62h1v1h-1zM226 59h1v1h-1zM224 57h1v1h-1zM223 55h1v1h-1zM221 53h1v1h-1zM219 50h1v1h-1z" fill="#0000ff" shape-rendering="crispEdges"/>
<path d="M210 424h3v1h-3zM211 423h1v3h-1zM210 422h3v1h-3zM211 421h1v3h-1zM210 420h3v1h-3zM211 419h1v3h-1zM210 418h3v1h-3zM211 417h1v3h-1zM210 416h3v1h-3zM211 415h1v3h-1zM212 413h3v1h-3zM213 412h1v3h-1zM212 411h3v1h-3zM213 410h1v3h-1zM220 409h3v1h-3zM221 408h1v3h-1zM223 407h3v1h-3zM224 406h1v3h-1zM222 404h3v1h-3zM223 403h1v3h-1zM222 402h3v1h-3zM223 401h1v3h-1zM220 400h3v1h-3zM221 399h1v3h-1zM218 398h3v1h-3zM219 397h1v3h-1zM217 396h3v1h-3zM218 395h1v3h-1zM215 393h3v1h-3zM216 392h1v3h-1zM215 391h3v1h-3zM216 390h1v3h-1zM215 389h3v1h-3zM216 388h1v3h-1zM213 387h3v1h-3zM214 386h1v3h-1zM213 384h3v1h-3zM214 383h1v3h-1zM213 382h3v1h-3zM214 381h1v3h-1zM212 380h3v1h-3zM213 379h1v3h-1zM212 378h3v1h-3zM213 377h1v3h-1zM212 376h3v1h-3zM213 375h1v3h-1zM212 373h3v1h-3zM213 372h1v3h-1zM212 371h3v1h-3zM213 370h1v3h-1zM213 369h3v1h-3zM214 368h1v3h-1zM213 367h3v1h-3zM214 366h1v3h-1zM213 364h3v1h-3zM214 363h1v3h-1zM223 362h3v1h-3zM224 361h1v3h-1zM232 360h3v1h-3zM233 359h1v3h-1zM230 358h3v1h-3zM231 357h1v3h-1zM228 355h3v1h-3zM229 354h1v3h-1zM218 353h3v1h-3zM219 352h1v3h-1zM222 351h3v1h-3zM223 350h1v3h-1zM223 349h3v1h-3zM224 348h1v3h-1zM260 347h3v1h-3zM261 346h1v3h-1zM256 344h3v1h-3zM257 343h1v3h-1zM253 342h3v1h-3zM254 341h1v3h-1zM230 340h3v1h-3zM231 339h1v3h-1zM232 338h3v1h-3zM233 337h1v3h-1zM228 335h3v1h-3zM229 334h1v3h-1zM225 333h3v1h-3zM226 332h1v3h-1zM220 331h3v1h-3zM221 330h1v3h-1zM213 329h3v1h-3zM214 328h1v3h-1zM212 327h3v1h-3zM213 326h1v3h-1zM212 324h3v1h-3zM213 323h1v3h-1zM212 322h3v1h-3zM213 321h1v3h-1zM212 320h3v1h-3zM213 319h1v3h-1zM210 318h3v1h-3zM211 317h1v3h-1zM210 315h3v1h-3zM211 314h1v3h-1zM210 313h3v1h-3zM211 312h1v3h-1zM210 311h3v1h-3zM211 310h1v3h-1zM210 309h3v1h-3zM211 308h1v3h-1zM210 307h3v1h-3zM211 306h1v3h-1zM210 304h3v1h-3zM211 303h1v3h-1zM212 302h3v1h-3zM213 301h1v3h-1zM212 300h3v1h-3zM213 299h1v3h-1zM213 298h3v1h-3zM214 297h1v3h-1zM215 295h3v1h-3zM216 294h1v3h-1zM215 293h3v1h-3zM216 292h1v3h-1zM213 291h3v1h-3zM214 290h1v3h-1zM212 289h3v1h-3zM213 288h1v3h-1zM210 286h3v1h-3zM211 285h1v3h-1zM210 284h3v1h-3zM211 283h1v3h-1zM210 282h3v1h-3zM211 281h1v3h-1zM210 280h3v1h-3zM211 279h1v3h-1zM210 278h3v1h-3zM211 277h1v3h-1zM210 275h3v1h-3zM211 274h1v3h-1zM210 273h3v1h-3zM211 272h1v3h-1zM210 271h3v1h-3zM211 270h1v3h-1zM210 269h3v1h-3zM211 268h1v3h-1zM210 266h3v1h-3zM211 265h1v3h-1zM210 264h3v1h-3zM211 263h1v3h-1zM210 262h3v1h-3zM211 261h1v3h-1zM210 260h3v1h-3zM211 259h1v3h-1zM210 258h3v1h-3zM211 257h1v3h-1zM210 255h3v1h-3zM211 254h1v3h-1zM212 253h3v1h-3zM213 252h1v3h-1zM212 251h3v1h-3zM213 250h1v3h-1zM212 249h3v1h-3zM213 248h1v3h-1zM213 246h3v1h-3zM214 245h1v3h-1zM215 244h3v1h-3zM216 243h1v3h-1zM215 242h3v1h-3zM216 241h1v3h-1zM215 240h3v1h-3zM216 239h1v3h-1zM213 238h3v1h-3zM214 237h1v3h-1zM213 235h3v1h-3zM214 234h1v3h-1zM213 233h3v1h-3zM214 232h1v3h-1zM212 231h3v1h-3zM213 230h1v3h-1zM212 229h3v1h-3zM213 228h1v3h-1zM212 226h3v1h-3zM213 225h1v3h-1zM210 224h3v1h-3zM211 223h1v3h-1zM210 222h3v1h-3zM211 221h1v3h-1zM210 220h3v1h-3zM211 219h1v3h-1zM210 217h3v1h-3zM211 216h1v3h-1zM210 215h3v1h-3zM211 214h1v3h-1zM210 213h3v1h-3zM211 212h1v3h-1zM210 211h3v1h-3zM211 210h1v3h-1zM210 209h3v1h-3zM211 208h1v3h-1zM210 206h3v1h-3zM211 205h1v3h-1zM210 204h3v1h-3zM211 203h1v3h-1zM210 202h3v1h-3zM211 201h1v3h-1zM210 200h3v1h-3zM211 199h1v3h-1zM210 197h3v1h-3zM211 196h1v3h-1zM212 195h3v1h-3zM213 194h1v3h-1zM210 193h3v1h-3zM211 192h1v3h-1zM210 191h3v1h-3zM211 190h1v3h-1zM210 189h3v1h-3zM211 188h1v3h-1zM210 186h3v1h-3zM211 185h1v3h-1zM210 184h3v1h-3zM211 183h1v3h-1zM210 182h3v1h-3zM211 181h1v3h-1zM210 180h3v1h-3zM211 179h1v3h-1zM210 177h3v1h-3zM211 176h1v3h-1zM210 175h3v1h-3zM211 174h1v3h-1zM210 173h3v1h-3zM211 172h1v3h-1zM210 171h3v1h-3zM211 170h1v3h-1zM210 168h3v1h-3zM211 167h1v3h-1zM210 166h3v1h-3zM211 165h1v3h-1zM210 164h3v1h-3zM211 163h1v3h-1zM210 162h3v1h-3zM211 161h1v3h-1zM210 160h3v1h-3zM211 159h1v3h-1zM210 157h3v1h-3zM211 156h1v3h-1zM210 155h3v1h-3zM211 154h1v3h-1zM212 153h3v1h-3zM213 152h1v3h-1zM210 151h3v1h-3zM211 150h1v3h-1zM210 148h3v1h-3zM211 147h1v3h-1zM210 146h3v1h-3zM211 145h1v3h-1zM210 144h3v1h-3zM211 143h1v3h-1zM210 142h3v1h-3zM211 141h1v3h-1zM210 140h3v1h-3zM211 139h1v3h-1zM210 137h3v1h-3zM211 136h1v3h-1zM210 135h3v1h-3zM211 134h1v3h-1zM210 133h3v1h-3zM211 132h1v3h-1zM210 131h3v1h-3zM211 130h1v3h-1zM210 128h3v1h-3zM211 127h1v3h-1zM210 126h3v1h-3zM211 125h1v3h-1zM210 124h3v1h-3zM211 123h1v3h-1zM210 122h3v1h-3zM211 121h1v3h-1zM212 120h3v1h-3zM213 119h1v3h-1zM212 117h3v1h-3zM213 116h1v3h-1zM212 115h3v1h-3zM213 114h1v3h-1zM212 113h3v1h-3zM213 112h1v3h-1zM212 111h3v1h-3zM213 110h1v3h-1zM210 108h3v1h-3zM211 107h1v3h-1zM210 106h3v1h-3zM211 105h1v3h-1zM210 104h3v1h-3zM211 103h1v3h-1zM210 102h3v1h-3zM211 101h1v3h-1zM210 99h3v1h-3zM211 98h1v3h-1zM210 97h3v1h-3zM211 96h1v3h-1zM210 95h3v1h-3zM211 94h1v3h-1zM210 93h3v1h-3zM211 92h1v3h-1zM210 91h3v1h-3zM211 90h1v3h-1zM210 88h3v1h-3zM211 87h1v3h-1zM210 86h3v1h-3zM211 85h1v3h-1zM210 84h3v1h-3zM211 83h1v3h-1zM212 82h3v1h-3zM213 81h1v3h-1zM210 79h3v1h-3zM211 78h1v3h-1zM210 77h3v1h-3zM211 76h1v3h-1zM210 75h3v1h-3zM211 74h1v3h-1zM210 73h3v1h-3zM211 72h1v3h-1zM210 71h3v1h-3zM211 70h1v3h-1zM210 68h3v1h-3zM211 67h1v3h-1zM210 66h3v1h-3zM211 65h1v3h-1zM210 64h3v1h-3zM211 63h1v3h-1zM210 62h3v1h-3zM211 61h1v3h-1zM210 59h3v1h-3zM211 58h1v3h-1zM210 57h3v1h-3zM211 56h1v3h-1zM210 55h3v1h-3zM211 54h1v3h-1zM210 53h3v1h-3zM211 52h1v3h-1zM210 50h3v1h-3zM211 49h1v3h-1z" fill="#ff0000" fill-opacity=".5" shape-rendering="crispEdges"/>
<path d="M211 424h1v1h-1zM211 422h1v1h-1zM211 420h1v1h-1zM211 418h1v1h-1zM211 416h1v1h-1zM213 413h1v1h-1zM213 411h1v1h-1zM221 409h1v1h-1zM224 407h1v1h-1zM223 404h1v1h-1zM223 402h1v1h-1zM221 400h1v1h-1zM219 398h1v1h-1zM218 396h1v1h-1zM216 393h1v1h-1zM216 391h1v1h-1zM216 389h1v1h-1zM214 387h1v1h-1zM214 384h1v1h-1zM214 382h1v1h-1zM213 380h1v1h-1zM213 378h1v1h-1zM213 376h1v1h-1zM213 373h1v1h-1zM213 371h1v1h-1zM214 369h1v1h-1zM214 367h1v1h-1zM214 364h1v1h-1zM224 362h1v1h-1zM233 360h1v1h-1zM231 358h1v1h-1zM229 355h1v1h-1zM219 353h1v1h-1zM223 351h1v1h-1zM224 349h1v1h-1zM261 347h1v1h-1zM257 344h1v1h-1zM254 342h1v1h-1zM231 340h1v1h-1zM233 338h1v1h-1zM229 335h1v1h-1zM226 333h1v1h-1zM221 331h1v1h-1zM214 329h1v1h-1zM213 327h1v1h-1zM213 324h1v1h-1zM213 322h1v1h-1zM213 320h1v1h-1zM211 318h1v1h-1zM211 315h1v1h-1zM211 313h1v1h-1zM211 311h1v1h-1zM211 309h1v1h-1zM211 307h1v1h-1zM211 304h1v1h-1zM213 302h1v1h-1zM213 300h1v1h-1zM214 298h1v1h-1zM216 295h1v1h-1zM216 293h1v1h-1zM214 291h1v1h-1zM213 289h1v1h-1zM211 286h1v1h-1zM211 284h1v1h-1zM211 282h1v1h-1zM211 280h1v1h-1zM211 278h1v1h-1zM211 275h1v1h-1zM211 273h1v1h-1zM211 271h1v1h-1zM211 269h1v1h-1zM211 266h1v1h-1zM211 264h1v1h-1zM211 262h1v1h-1zM211 260h1v1h-1zM211 258h1v1h-1zM211 255h1v1h-1zM213 253h1v1h-1zM213 251h1v1h-1zM213 249h1v1h-1zM214 246h1v1h-1zM216 244h1v1h-1zM216 242h1v1h-1zM216 240h1v1h-1zM214 238h1v1h-1zM214 235h1v1h-1zM214 233h1v1h-1zM213 231h1v1h-1zM213 229h1v1h-1zM213 226h1v1h-1zM211 224h1v1h-1zM211 222h1v1h-1zM211 220h1v1h-1zM211 217h1v1h-1zM211 215h1v1h-1zM211 213h1v1h-1zM211 211h1v1h-1zM211 209h1v1h-1zM211 206h1v1h-1zM211 204h1v1h-1zM211 202h1v1h-1zM211 200h1v1h-1zM211 197h1v1h-1zM213 195h1v1h-1zM211 193h1v1h-1zM211 191h1v1h-1zM211 189h1v1h-1zM211 186h1v1h-1zM211 184h1v1h-1zM211 182h1v1h-1zM211 180h1v1h-1zM211 177h1v1h-1zM211 175h1v1h-1zM211 173h1v1h-1zM211 171h1v1h-1zM211 168h1v1h-1zM211 166h1v1h-1zM211 164h1v1h-1zM211 162h1v1h-1zM211 160h1v1h-1zM211 157h1v1h-1zM211 155h1v1h-1zM213 153h1v1h-1zM211 151h1v1h-1zM211 148h1v1h-1zM211 146h1v1h-1zM211 144h1v1h-1zM211 142h1v1h-1zM211 140h1v1h-1zM211 137h1v1h-1zM211 135h1v1h-1zM211 133h1v1h-1zM211 131h1v1h-1zM211 128h1v1h-1zM211 126h1v1h-1zM211 124h1v1h-1zM211 122h1v1h-1zM213 120h1v1h-1zM213 117h1v1h-1zM213 115h1v1h-1zM213 113h1v1h-1zM213 111h1v1h-1zM211 108h1v1h-1zM211 106h1v1h-1zM211 104h1v1h-1zM211 102h1v1h-1zM211 99h1v1h-1zM211 97h1v1h-1zM211 95h1v1h-1zM211 93h1v1h-1zM211 91h1v1h-1zM211 88h1v1h-1zM211 86h1v1h-1zM211 84h1v1h-1zM213 82h1v1h-1zM211 79h1v1h-1zM211 77h1v1h-1zM211 75h1v1h-1zM211 73h1v1h-1zM211 71h1v1h-1zM211 68h1v1h-1zM211 66h1v1h-1zM211 64h1v1h-1zM211 62h1v1h-1zM211 59h1v1h-1zM211 57h1v1h-1zM211 55h1v1h-1zM211 53h1v1h-1zM211 50h1v1h-1z" fill="#ff0000" shape-rendering="crispEdges"/>
<path d="M207.5 45V430M207 45.5H546M545.5 45V430" stroke="#000" stroke-width="1" fill="none" shape-rendering="crispEdges"/>
<path d="M208 239.5H547" stroke="#0000f0" stroke-width="1" shape-rendering="crispEdges"/>
<circle cx="240.5" cy="230.8" r="4.9" fill="none" stroke="#00ff00" stroke-width="1.1"/>
<text x="240.5" y="233.8" font-size="8.5" fill="#00ff00" text-anchor="middle" font-weight="bold">9</text>
<circle cx="210.3" cy="228" r="4.9" fill="none" stroke="#00ff00" stroke-width="1.1"/>
<text x="210.3" y="231" font-size="8.5" fill="#00ff00" text-anchor="middle" font-weight="bold">9</text>
<circle cx="230" cy="228.5" r="4.9" fill="none" stroke="#ffa500" stroke-width="1.1"/>
<text x="230" y="231.5" font-size="8.5" fill="#ffa500" text-anchor="middle" font-weight="bold">1</text>
<circle cx="237" cy="226" r="4.9" fill="none" stroke="#ffa500" stroke-width="1.1"/>
<text x="237" y="229" font-size="8.5" fill="#ffa500" text-anchor="middle" font-weight="bold">9</text>
<circle cx="242.8" cy="228" r="4.9" fill="none" stroke="#ffa500" stroke-width="1.1"/>
<text x="242.8" y="231" font-size="8.5" fill="#ffa500" text-anchor="middle" font-weight="bold">9</text>
<circle cx="253" cy="230.5" r="4.9" fill="none" stroke="#00ff00" stroke-width="1.1"/>
<text x="253" y="233.5" font-size="8.5" fill="#00ff00" text-anchor="middle" font-weight="bold">9</text>
<circle cx="277" cy="228.8" r="4.9" fill="none" stroke="#ff0000" stroke-width="1.1"/>
<text x="277" y="231.8" font-size="8.5" fill="#ff0000" text-anchor="middle" font-weight="bold">1</text>
<circle cx="289.7" cy="228" r="4.9" fill="none" stroke="#ff0000" stroke-width="1.1"/>
<text x="289.7" y="231" font-size="8.5" fill="#ff0000" text-anchor="middle" font-weight="bold">9</text>
<circle cx="313.5" cy="226" r="4.9" fill="none" stroke="#00ff00" stroke-width="1.1"/>
<text x="313.5" y="229" font-size="8.5" fill="#00ff00" text-anchor="middle" font-weight="bold">9</text>
<circle cx="371.7" cy="226.4" r="4.9" fill="none" stroke="#ff0000" stroke-width="1.1"/>
<text x="371.7" y="229.4" font-size="8.5" fill="#ff0000" text-anchor="middle" font-weight="bold">9</text>
<circle cx="420.7" cy="226.4" r="4.9" fill="none" stroke="#0000ff" stroke-width="1.1"/>
<text x="420.7" y="229.4" font-size="8.5" fill="#0000ff" text-anchor="middle" font-weight="bold">9</text>
<circle cx="442.6" cy="226.4" r="4.9" fill="none" stroke="#00bfff" stroke-width="1.1"/>
<text x="442.6" y="229.4" font-size="8.5" fill="#00bfff" text-anchor="middle" font-weight="bold">9</text>
<circle cx="532.5" cy="228.3" r="4.9" fill="none" stroke="#00bfff" stroke-width="1.1"/>
<text x="532.5" y="231.3" font-size="8.5" fill="#00bfff" text-anchor="middle" font-weight="bold">1</text>
<circle cx="546.2" cy="228.3" r="4.9" fill="none" stroke="#00bfff" stroke-width="1.1"/>
<text x="546.2" y="231.3" font-size="8.5" fill="#00bfff" text-anchor="middle" font-weight="bold">9</text>
<circle cx="527.5" cy="228.3" r="4.9" fill="none" stroke="#0000ff" stroke-width="1.1"/>
<text x="527.5" y="231.3" font-size="8.5" fill="#0000ff" text-anchor="middle" font-weight="bold">1</text>
<circle cx="539.4" cy="228.3" r="4.9" fill="none" stroke="#0000ff" stroke-width="1.1"/>
<text x="539.4" y="231.3" font-size="8.5" fill="#0000ff" text-anchor="middle" font-weight="bold">9</text>
<circle cx="227.3" cy="143.3" r="4.9" fill="none" stroke="#ffa500" stroke-width="1.1"/>
<text x="227.3" y="146.3" font-size="8.5" fill="#ffa500" text-anchor="middle" font-weight="bold">9</text>
<circle cx="380.7" cy="143.3" r="4.9" fill="none" stroke="#ff0000" stroke-width="1.1"/>
<text x="380.7" y="146.3" font-size="8.5" fill="#ff0000" text-anchor="middle" font-weight="bold">9</text>
<path d="M210 236h1v1h-1zM212 236h1v1h-1zM211 237h1v1h-1zM210 238h1v1h-1zM212 238h1v1h-1z" fill="#00ff00" shape-rendering="crispEdges"/>
<path d="M236 236h1v1h-1zM238 236h1v1h-1zM237 237h1v1h-1zM236 238h1v1h-1zM238 238h1v1h-1z" fill="#ffa500" shape-rendering="crispEdges"/>
<path d="M246 239h1v1h-1zM248 239h1v1h-1zM247 240h1v1h-1zM246 241h1v1h-1zM248 241h1v1h-1z" fill="#00ff00" shape-rendering="crispEdges"/>
<path d="M283 236h1v1h-1zM285 236h1v1h-1zM284 237h1v1h-1zM283 238h1v1h-1zM285 238h1v1h-1z" fill="#ff0000" shape-rendering="crispEdges"/>
<path d="M313 235h1v1h-1zM315 235h1v1h-1zM314 236h1v1h-1zM313 237h1v1h-1zM315 237h1v1h-1z" fill="#00ff00" shape-rendering="crispEdges"/>
<path d="M371 235h1v1h-1zM373 235h1v1h-1zM372 236h1v1h-1zM371 237h1v1h-1zM373 237h1v1h-1z" fill="#ff0000" shape-rendering="crispEdges"/>
<path d="M420 235h1v1h-1zM422 235h1v1h-1zM421 236h1v1h-1zM420 237h1v1h-1zM422 237h1v1h-1z" fill="#0000ff" shape-rendering="crispEdges"/>
<path d="M442 235h1v1h-1zM444 235h1v1h-1zM443 236h1v1h-1zM442 237h1v1h-1zM444 237h1v1h-1z" fill="#00bfff" shape-rendering="crispEdges"/>
<path d="M533 236h1v1h-1zM535 236h1v1h-1zM534 237h1v1h-1zM533 238h1v1h-1zM535 238h1v1h-1z" fill="#0000ff" shape-rendering="crispEdges"/>
<path d="M538 236h1v1h-1zM540 236h1v1h-1zM539 237h1v1h-1zM538 238h1v1h-1zM540 238h1v1h-1z" fill="#00bfff" shape-rendering="crispEdges"/>
<path d="M227 152h1v1h-1zM229 152h1v1h-1zM228 153h1v1h-1zM227 154h1v1h-1zM229 154h1v1h-1z" fill="#ffa500" shape-rendering="crispEdges"/>
<path d="M380 152h1v1h-1zM382 152h1v1h-1zM381 153h1v1h-1zM380 154h1v1h-1zM382 154h1v1h-1z" fill="#ff0000" shape-rendering="crispEdges"/>
<path d="M215 429.5H538" stroke="#303030" stroke-width="1" shape-rendering="crispEdges"/>
<path d="M207.5 429.5l8 -4.5v2.5h8.5v4h-8.5v2.5z" fill="#00ff00" stroke="#000" stroke-width="1" stroke-linejoin="miter"/>
<path d="M546.5 429.5l-8 -4.5v2.5h-8.5v4h8.5v2.5z" fill="#00ff00" stroke="#000" stroke-width="1"/>
<text x="211" y="446.0" font-size="13.5" fill="#00ff00" text-anchor="middle" textLength="25" lengthAdjust="spacingAndGlyphs">[OX]</text>
<text x="275.8" y="446.0" font-size="13.5" fill="#00ff00" text-anchor="middle" textLength="32" lengthAdjust="spacingAndGlyphs">0.020</text>
<text x="342.2" y="446.0" font-size="13.5" fill="#00ff00" text-anchor="middle" textLength="32" lengthAdjust="spacingAndGlyphs">0.040</text>
<text x="408.5" y="446.0" font-size="13.5" fill="#00ff00" text-anchor="middle" textLength="32" lengthAdjust="spacingAndGlyphs">0.060</text>
<text x="474.9" y="446.0" font-size="13.5" fill="#00ff00" text-anchor="middle" textLength="32" lengthAdjust="spacingAndGlyphs">0.080</text>
<text x="541.2" y="446.0" font-size="13.5" fill="#00ff00" text-anchor="middle" textLength="32" lengthAdjust="spacingAndGlyphs">0.100</text>
<path d="M215 449.5H538" stroke="#303030" stroke-width="1" shape-rendering="crispEdges"/>
<path d="M207.5 449.5l8 -4.5v2.5h8.5v4h-8.5v2.5z" fill="#ff0000" stroke="#000" stroke-width="1" stroke-linejoin="miter"/>
<path d="M546.5 449.5l-8 -4.5v2.5h-8.5v4h8.5v2.5z" fill="#ff0000" stroke="#000" stroke-width="1"/>
<text x="211" y="466.0" font-size="13.5" fill="#ff0000" text-anchor="middle" textLength="25" lengthAdjust="spacingAndGlyphs">[NO]</text>
<text x="275.8" y="466.0" font-size="13.5" fill="#ff0000" text-anchor="middle" textLength="32" lengthAdjust="spacingAndGlyphs">0.040</text>
<text x="342.2" y="466.0" font-size="13.5" fill="#ff0000" text-anchor="middle" textLength="32" lengthAdjust="spacingAndGlyphs">0.080</text>
<text x="408.5" y="466.0" font-size="13.5" fill="#ff0000" text-anchor="middle" textLength="32" lengthAdjust="spacingAndGlyphs">0.120</text>
<text x="474.9" y="466.0" font-size="13.5" fill="#ff0000" text-anchor="middle" textLength="32" lengthAdjust="spacingAndGlyphs">0.160</text>
<text x="541.2" y="466.0" font-size="13.5" fill="#ff0000" text-anchor="middle" textLength="32" lengthAdjust="spacingAndGlyphs">0.200</text>
<path d="M215 469.5H538" stroke="#303030" stroke-width="1" shape-rendering="crispEdges"/>
<path d="M207.5 469.5l8 -4.5v2.5h8.5v4h-8.5v2.5z" fill="#ffa500" stroke="#000" stroke-width="1" stroke-linejoin="miter"/>
<path d="M546.5 469.5l-8 -4.5v2.5h-8.5v4h8.5v2.5z" fill="#ffa500" stroke="#000" stroke-width="1"/>
<text x="211" y="486.0" font-size="13.5" fill="#ffa500" text-anchor="middle" textLength="32" lengthAdjust="spacingAndGlyphs">[NO2]</text>
<text x="275.8" y="486.0" font-size="13.5" fill="#ffa500" text-anchor="middle" textLength="32" lengthAdjust="spacingAndGlyphs">0.020</text>
<text x="342.2" y="486.0" font-size="13.5" fill="#ffa500" text-anchor="middle" textLength="32" lengthAdjust="spacingAndGlyphs">0.040</text>
<text x="408.5" y="486.0" font-size="13.5" fill="#ffa500" text-anchor="middle" textLength="32" lengthAdjust="spacingAndGlyphs">0.060</text>
<text x="474.9" y="486.0" font-size="13.5" fill="#ffa500" text-anchor="middle" textLength="32" lengthAdjust="spacingAndGlyphs">0.080</text>
<text x="541.2" y="486.0" font-size="13.5" fill="#ffa500" text-anchor="middle" textLength="32" lengthAdjust="spacingAndGlyphs">0.100</text>
<path d="M215 489.5H538" stroke="#303030" stroke-width="1" shape-rendering="crispEdges"/>
<path d="M207.5 489.5l8 -4.5v2.5h8.5v4h-8.5v2.5z" fill="#00bfff" stroke="#000" stroke-width="1" stroke-linejoin="miter"/>
<path d="M546.5 489.5l-8 -4.5v2.5h-8.5v4h8.5v2.5z" fill="#00bfff" stroke="#000" stroke-width="1"/>
<text x="211" y="506.0" font-size="13.5" fill="#00bfff" text-anchor="middle" textLength="32" lengthAdjust="spacingAndGlyphs">[CH4]</text>
<text x="275.8" y="506.0" font-size="13.5" fill="#00bfff" text-anchor="middle" textLength="25" lengthAdjust="spacingAndGlyphs">2.00</text>
<text x="342.2" y="506.0" font-size="13.5" fill="#00bfff" text-anchor="middle" textLength="25" lengthAdjust="spacingAndGlyphs">3.00</text>
<text x="408.5" y="506.0" font-size="13.5" fill="#00bfff" text-anchor="middle" textLength="25" lengthAdjust="spacingAndGlyphs">4.00</text>
<text x="474.9" y="506.0" font-size="13.5" fill="#00bfff" text-anchor="middle" textLength="25" lengthAdjust="spacingAndGlyphs">5.00</text>
<text x="541.2" y="506.0" font-size="13.5" fill="#00bfff" text-anchor="middle" textLength="25" lengthAdjust="spacingAndGlyphs">6.00</text>
<path d="M215 509.5H538" stroke="#303030" stroke-width="1" shape-rendering="crispEdges"/>
<path d="M207.5 509.5l8 -4.5v2.5h8.5v4h-8.5v2.5z" fill="#0000ff" stroke="#000" stroke-width="1" stroke-linejoin="miter"/>
<path d="M546.5 509.5l-8 -4.5v2.5h-8.5v4h8.5v2.5z" fill="#0000ff" stroke="#000" stroke-width="1"/>
<text x="211" y="526.0" font-size="13.5" fill="#0000ff" text-anchor="middle" textLength="39" lengthAdjust="spacingAndGlyphs">[NMHC]</text>
<text x="275.8" y="526.0" font-size="13.5" fill="#0000ff" text-anchor="middle" textLength="25" lengthAdjust="spacingAndGlyphs">0.40</text>
<text x="342.2" y="526.0" font-size="13.5" fill="#0000ff" text-anchor="middle" textLength="25" lengthAdjust="spacingAndGlyphs">0.80</text>
<text x="408.5" y="526.0" font-size="13.5" fill="#0000ff" text-anchor="middle" textLength="25" lengthAdjust="spacingAndGlyphs">1.20</text>
<text x="474.9" y="526.0" font-size="13.5" fill="#0000ff" text-anchor="middle" textLength="25" lengthAdjust="spacingAndGlyphs">1.60</text>
<text x="541.2" y="526.0" font-size="13.5" fill="#0000ff" text-anchor="middle" textLength="25" lengthAdjust="spacingAndGlyphs">2.00</text>
<path d="M215 529.5H538" stroke="#303030" stroke-width="1" shape-rendering="crispEdges"/>
<path d="M207.5 529.5l8 -4.5v2.5h8.5v4h-8.5v2.5z" fill="#a52a2a" stroke="#000" stroke-width="1" stroke-linejoin="miter"/>
<path d="M546.5 529.5l-8 -4.5v2.5h-8.5v4h8.5v2.5z" fill="#a52a2a" stroke="#000" stroke-width="1"/>
<text x="211" y="546.0" font-size="13.5" fill="#a52a2a" text-anchor="middle" textLength="39" lengthAdjust="spacingAndGlyphs">[TEMP]</text>
<text x="275.8" y="546.0" font-size="13.5" fill="#a52a2a" text-anchor="middle" textLength="19" lengthAdjust="spacingAndGlyphs">8.0</text>
<text x="342.2" y="546.0" font-size="13.5" fill="#a52a2a" text-anchor="middle" textLength="25" lengthAdjust="spacingAndGlyphs">16.0</text>
<text x="408.5" y="546.0" font-size="13.5" fill="#a52a2a" text-anchor="middle" textLength="25" lengthAdjust="spacingAndGlyphs">24.0</text>
<text x="474.9" y="546.0" font-size="13.5" fill="#a52a2a" text-anchor="middle" textLength="25" lengthAdjust="spacingAndGlyphs">32.0</text>
<text x="541.2" y="546.0" font-size="13.5" fill="#a52a2a" text-anchor="middle" textLength="25" lengthAdjust="spacingAndGlyphs">40.0</text>
<path d="M215 549.5H538" stroke="#303030" stroke-width="1" shape-rendering="crispEdges"/>
<path d="M207.5 549.5l8 -4.5v2.5h8.5v4h-8.5v2.5z" fill="#d2691e" stroke="#000" stroke-width="1" stroke-linejoin="miter"/>
<path d="M546.5 549.5l-8 -4.5v2.5h-8.5v4h8.5v2.5z" fill="#d2691e" stroke="#000" stroke-width="1"/>
<text x="211" y="566.0" font-size="13.5" fill="#d2691e" text-anchor="middle" textLength="32" lengthAdjust="spacingAndGlyphs">[HUM]</text>
<text x="275.8" y="566.0" font-size="13.5" fill="#d2691e" text-anchor="middle" textLength="12" lengthAdjust="spacingAndGlyphs">20</text>
<text x="342.2" y="566.0" font-size="13.5" fill="#d2691e" text-anchor="middle" textLength="12" lengthAdjust="spacingAndGlyphs">40</text>
<text x="408.5" y="566.0" font-size="13.5" fill="#d2691e" text-anchor="middle" textLength="12" lengthAdjust="spacingAndGlyphs">60</text>
<text x="474.9" y="566.0" font-size="13.5" fill="#d2691e" text-anchor="middle" textLength="12" lengthAdjust="spacingAndGlyphs">80</text>
<text x="541.2" y="566.0" font-size="13.5" fill="#d2691e" text-anchor="middle" textLength="19" lengthAdjust="spacingAndGlyphs">100</text>
</svg>
<div style="left:560px;top:31px;width:362px;height:33px;background:#dcdcdc;"></div>
<div style="left:922px;top:31px;width:5px;height:546px;background:#e4e4e4;"></div>
<div style="left:926px;top:31px;width:1px;height:546px;background:#ffffff;"></div>
<div class="db tb" style="left:561px;top:33px;width:35px;height:28px;font-size:16px;line-height:26px;"></div>
<svg style="position:absolute;left:571px;top:39px" width="15" height="13"><path d="M0 0h15l-7.5 13z" fill="#ff69b4"/></svg>
<div class="db tb" style="left:597px;top:33px;width:33px;height:28px;font-size:16px;line-height:26px;"></div>
<svg style="position:absolute;left:606px;top:39px" width="15" height="13"><path d="M0 0h15l-7.5 13z" fill="#f8f8f8"/></svg>
<div class="db tb" style="left:820px;top:33px;width:33px;height:28px;font-size:16px;line-height:26px;"></div>
<svg style="position:absolute;left:829px;top:39px" width="15" height="13"><path d="M0 13h15l-7.5-13z" fill="#f8f8f8"/></svg>
<div class="db tb" style="left:854px;top:33px;width:36px;height:28px;font-size:16px;line-height:26px;"></div>
<svg style="position:absolute;left:864px;top:39px" width="15" height="13"><path d="M0 13h15l-7.5-13z" fill="#ff69b4"/></svg>
<div class="db tb" style="left:892px;top:33px;width:30px;height:28px;font-size:16px;line-height:26px;"></div>
<div style="left:900px;top:39px;width:14px;height:13px;border:2px solid #fff;"></div>
<div class="t" id="dt" style="left:642px;top:38px;color:#0000ff;font-size:18px;letter-spacing:0.18px;text-shadow:0.5px 0 0 #0000ff;">2015/09/03 11:00:00</div>
<div style="left:560px;top:63px;width:362px;height:421px;background:#808080;border-top:1px solid #808080;border-left:1px solid #808080;"></div>
<div style="left:561px;top:64px;width:361px;height:420px;background:#808080;border-top:2px solid #404040;border-left:2px solid #404040;"></div>
<div style="left:563px;top:66px;width:319px;height:19px;background:#d4d0c8;border-top:1px solid #fff;"></div>
<div style="left:563px;top:66px;width:1px;height:18px;background:#ffffff;"></div>
<div class="t" style="left:570px;top:66px;font-size:18px;color:#000;">□</div>
<div style="left:592px;top:66px;width:1px;height:18px;background:#ffffff;"></div>
<div style="left:591px;top:68px;width:1px;height:15px;background:#808080;"></div>
<div class="t" style="left:598px;top:68px;font-size:16px;letter-spacing:0.3px;color:#000;">項目</div>
<div style="left:638px;top:66px;width:1px;height:18px;background:#ffffff;"></div>
<div style="left:637px;top:68px;width:1px;height:15px;background:#808080;"></div>
<div class="t" style="left:644px;top:68px;font-size:16px;letter-spacing:0.3px;color:#000;">測定値</div>
<div style="left:699px;top:66px;width:1px;height:18px;background:#ffffff;"></div>
<div style="left:698px;top:68px;width:1px;height:15px;background:#808080;"></div>
<div class="t" style="left:705px;top:68px;font-size:16px;letter-spacing:0.3px;color:#000;">単位</div>
<div style="left:755px;top:66px;width:1px;height:18px;background:#ffffff;"></div>
<div style="left:754px;top:68px;width:1px;height:15px;background:#808080;"></div>
<div class="t" style="left:762px;top:69px;font-size:14px;color:#000;"><span style="position:static;display:inline-block;transform:scaleX(.8);transform-origin:0 50%;letter-spacing:1px;">mV</span></div>
<div style="left:788px;top:66px;width:1px;height:18px;background:#ffffff;"></div>
<div style="left:787px;top:68px;width:1px;height:15px;background:#808080;"></div>
<div class="t" style="left:794px;top:69px;font-size:14px;color:#000;"><span style="position:static;display:inline-block;transform:scaleX(.8);transform-origin:0 50%;letter-spacing:1px;">R</span></div>
<div style="left:809px;top:66px;width:1px;height:18px;background:#ffffff;"></div>
<div style="left:808px;top:68px;width:1px;height:15px;background:#808080;"></div>
<div class="t" style="left:815px;top:68px;font-size:16px;letter-spacing:0.3px;color:#000;">状態</div>
<div style="left:563px;top:85px;width:28px;height:35px;background:#00ff00;"></div>
<div class="cell" style="left:592px;top:85px;width:45px;height:35px;background:#add8e6;color:#000;padding-left:4px;letter-spacing:2px;"><span style="position:static;display:inline-block;transform:scaleX(.72);transform-origin:0 50%;">OX</span></div>
<div class="cell" style="left:638px;top:85px;width:60px;height:35px;background:#ffb6c1;text-align:right;padding-right:5px;letter-spacing:1.2px;">0.011</div>
<div class="cell" style="left:699px;top:85px;width:55px;height:35px;background:#add8e6;padding-left:3px;letter-spacing:2.6px;"><span style="position:static;display:inline-block;transform:scaleX(0.72);transform-origin:0 50%;">ppm</span></div>
<div class="cell" style="left:755px;top:85px;width:32px;height:35px;background:#dcdcdc;text-align:right;padding-right:4px;letter-spacing:0.5px;">56</div>
<div class="cell" style="left:788px;top:85px;width:20px;height:35px;background:#dcdcdc;text-align:center;">3</div>
<div class="cell" style="left:809px;top:85px;width:73px;height:35px;background:#dcdcdc;"><div class="t" style="left:1px;top:5px;font-size:12px;line-height:12px;white-space:pre;">①調整中 ⑨
調整中あり</div></div>
<div style="left:570px;top:96px;width:13px;height:13px;background:#fff;border-top:1px solid #808080;border-left:1px solid #808080;border-right:1px solid #fff;border-bottom:1px solid #fff;"></div>
<div style="left:571px;top:97px;width:11px;height:11px;background:#fff;border-top:1px solid #404040;border-left:1px solid #404040;border-right:1px solid #d4d0c8;border-bottom:1px solid #d4d0c8;"></div>
<svg style="position:absolute;left:573px;top:99px" width="7" height="7"><path d="M0 2v3l2 2 5-5v-3l-5 5z" fill="#000"/></svg>
<div style="left:563px;top:121px;width:28px;height:35px;background:#ff0000;"></div>
<div class="cell" style="left:592px;top:121px;width:45px;height:35px;background:#add8e6;color:#000;padding-left:4px;letter-spacing:2px;"><span style="position:static;display:inline-block;transform:scaleX(.72);transform-origin:0 50%;">NO</span></div>
<div class="cell" style="left:638px;top:121px;width:60px;height:35px;background:#fff;text-align:right;padding-right:5px;letter-spacing:1.2px;">0.003</div>
<div class="cell" style="left:699px;top:121px;width:55px;height:35px;background:#add8e6;padding-left:3px;letter-spacing:2.6px;"><span style="position:static;display:inline-block;transform:scaleX(0.72);transform-origin:0 50%;">ppm</span></div>
<div class="cell" style="left:755px;top:121px;width:32px;height:35px;background:#dcdcdc;text-align:right;padding-right:4px;letter-spacing:0.5px;">14</div>
<div class="cell" style="left:788px;top:121px;width:20px;height:35px;background:#dcdcdc;text-align:center;">3</div>
<div class="cell" style="left:809px;top:121px;width:73px;height:35px;background:#dcdcdc;"></div>
<div style="left:570px;top:132px;width:13px;height:13px;background:#fff;border-top:1px solid #808080;border-left:1px solid #808080;border-right:1px solid #fff;border-bottom:1px solid #fff;"></div>
<div style="left:571px;top:133px;width:11px;height:11px;background:#fff;border-top:1px solid #404040;border-left:1px solid #404040;border-right:1px solid #d4d0c8;border-bottom:1px solid #d4d0c8;"></div>
<svg style="position:absolute;left:573px;top:135px" width="7" height="7"><path d="M0 2v3l2 2 5-5v-3l-5 5z" fill="#000"/></svg>
<div style="left:563px;top:157px;width:28px;height:35px;background:#ffa500;"></div>
<div class="cell" style="left:592px;top:157px;width:45px;height:35px;background:#add8e6;color:#000;padding-left:4px;letter-spacing:2px;"><span style="position:static;display:inline-block;transform:scaleX(.72);transform-origin:0 50%;">NO2</span></div>
<div class="cell" style="left:638px;top:157px;width:60px;height:35px;background:#fff;text-align:right;padding-right:5px;letter-spacing:1.2px;">0.016</div>
<div class="cell" style="left:699px;top:157px;width:55px;height:35px;background:#add8e6;padding-left:3px;letter-spacing:2.6px;"><span style="position:static;display:inline-block;transform:scaleX(0.72);transform-origin:0 50%;">ppm</span></div>
<div class="cell" style="left:755px;top:157px;width:32px;height:35px;background:#dcdcdc;text-align:right;padding-right:4px;letter-spacing:0.5px;">80</div>
<div class="cell" style="left:788px;top:157px;width:20px;height:35px;background:#dcdcdc;text-align:center;">3</div>
<div class="cell" style="left:809px;top:157px;width:73px;height:35px;background:#dcdcdc;"></div>
<div style="left:570px;top:168px;width:13px;height:13px;background:#fff;border-top:1px solid #808080;border-left:1px solid #808080;border-right:1px solid #fff;border-bottom:1px solid #fff;"></div>
<div style="left:571px;top:169px;width:11px;height:11px;background:#fff;border-top:1px solid #404040;border-left:1px solid #404040;border-right:1px solid #d4d0c8;border-bottom:1px solid #d4d0c8;"></div>
<svg style="position:absolute;left:573px;top:171px" width="7" height="7"><path d="M0 2v3l2 2 5-5v-3l-5 5z" fill="#000"/></svg>
<div style="left:563px;top:193px;width:28px;height:35px;background:#00bfff;"></div>
<div class="cell" style="left:592px;top:193px;width:45px;height:35px;background:#add8e6;color:#000;padding-left:4px;letter-spacing:2px;"><span style="position:static;display:inline-block;transform:scaleX(.72);transform-origin:0 50%;">CH4</span></div>
<div class="cell" style="left:638px;top:193px;width:60px;height:35px;background:#fff;text-align:right;padding-right:5px;letter-spacing:1.2px;">1.87</div>
<div class="cell" style="left:699px;top:193px;width:55px;height:35px;background:#add8e6;padding-left:3px;letter-spacing:2.6px;"><span style="position:static;display:inline-block;transform:scaleX(0.72);transform-origin:0 50%;">ppmC</span></div>
<div class="cell" style="left:755px;top:193px;width:32px;height:35px;background:#dcdcdc;text-align:right;padding-right:4px;letter-spacing:0.5px;">186</div>
<div class="cell" style="left:788px;top:193px;width:20px;height:35px;background:#dcdcdc;text-align:center;">2</div>
<div class="cell" style="left:809px;top:193px;width:73px;height:35px;background:#dcdcdc;"></div>
<div style="left:570px;top:204px;width:13px;height:13px;background:#fff;border-top:1px solid #808080;border-left:1px solid #808080;border-right:1px solid #fff;border-bottom:1px solid #fff;"></div>
<div style="left:571px;top:205px;width:11px;height:11px;background:#fff;border-top:1px solid #404040;border-left:1px solid #404040;border-right:1px solid #d4d0c8;border-bottom:1px solid #d4d0c8;"></div>
<svg style="position:absolute;left:573px;top:207px" width="7" height="7"><path d="M0 2v3l2 2 5-5v-3l-5 5z" fill="#000"/></svg>
<div style="left:563px;top:229px;width:28px;height:35px;background:#0000ff;"></div>
<div class="cell" style="left:592px;top:229px;width:45px;height:35px;background:#add8e6;color:#000;padding-left:4px;letter-spacing:2px;"><span style="position:static;display:inline-block;transform:scaleX(.72);transform-origin:0 50%;">NMHC</span></div>
<div class="cell" style="left:638px;top:229px;width:60px;height:35px;background:#fff;text-align:right;padding-right:5px;letter-spacing:1.2px;">0.11</div>
<div class="cell" style="left:699px;top:229px;width:55px;height:35px;background:#add8e6;padding-left:3px;letter-spacing:2.6px;"><span style="position:static;display:inline-block;transform:scaleX(0.72);transform-origin:0 50%;">ppmC</span></div>
<div class="cell" style="left:755px;top:229px;width:32px;height:35px;background:#dcdcdc;text-align:right;padding-right:4px;letter-spacing:0.5px;">11</div>
<div class="cell" style="left:788px;top:229px;width:20px;height:35px;background:#dcdcdc;text-align:center;">2</div>
<div class="cell" style="left:809px;top:229px;width:73px;height:35px;background:#dcdcdc;"></div>
<div style="left:570px;top:240px;width:13px;height:13px;background:#fff;border-top:1px solid #808080;border-left:1px solid #808080;border-right:1px solid #fff;border-bottom:1px solid #fff;"></div>
<div style="left:571px;top:241px;width:11px;height:11px;background:#fff;border-top:1px solid #404040;border-left:1px solid #404040;border-right:1px solid #d4d0c8;border-bottom:1px solid #d4d0c8;"></div>
<svg style="position:absolute;left:573px;top:243px" width="7" height="7"><path d="M0 2v3l2 2 5-5v-3l-5 5z" fill="#000"/></svg>
<div style="left:563px;top:265px;width:28px;height:35px;background:#8a2be2;"></div>
<div class="cell" style="left:592px;top:265px;width:45px;height:35px;background:#add8e6;color:#000;padding-left:4px;letter-spacing:2px;"><span style="position:static;display:inline-block;transform:scaleX(.72);transform-origin:0 50%;">WD</span></div>
<div class="cell" style="left:638px;top:265px;width:60px;height:35px;background:#fff;text-align:right;padding-right:5px;letter-spacing:1.2px;"><span style="position:static;display:inline-block;transform:scaleX(.55);transform-origin:100% 50%;letter-spacing:2px;">WNW</span></div>
<div class="cell" style="left:699px;top:265px;width:55px;height:35px;background:#add8e6;padding-left:3px;letter-spacing:2.6px;"><span style="position:static;display:inline-block;transform:scaleX(0.72);transform-origin:0 50%;">16DIRC</span></div>
<div class="cell" style="left:755px;top:265px;width:32px;height:35px;background:#dcdcdc;text-align:right;padding-right:4px;letter-spacing:0.5px;">548</div>
<div class="cell" style="left:788px;top:265px;width:20px;height:35px;background:#dcdcdc;text-align:center;">0</div>
<div class="cell" style="left:809px;top:265px;width:73px;height:35px;background:#dcdcdc;"></div>
<div style="left:570px;top:276px;width:13px;height:13px;background:#fff;border-top:1px solid #808080;border-left:1px solid #808080;border-right:1px solid #fff;border-bottom:1px solid #fff;"></div>
<div style="left:571px;top:277px;width:11px;height:11px;background:#fff;border-top:1px solid #404040;border-left:1px solid #404040;border-right:1px solid #d4d0c8;border-bottom:1px solid #d4d0c8;"></div>
<div style="left:563px;top:301px;width:28px;height:35px;background:#ee82ee;"></div>
<div class="cell" style="left:592px;top:301px;width:45px;height:35px;background:#0a246a;color:#fff;padding-left:4px;letter-spacing:2px;"><span style="position:static;display:inline-block;transform:scaleX(.72);transform-origin:0 50%;">WS</span></div>
<div class="cell" style="left:638px;top:301px;width:60px;height:35px;background:#fff;text-align:right;padding-right:5px;letter-spacing:1.2px;">0.6</div>
<div class="cell" style="left:699px;top:301px;width:55px;height:35px;background:#add8e6;padding-left:3px;letter-spacing:2.6px;"><span style="position:static;display:inline-block;transform:scaleX(0.72);transform-origin:0 50%;">m/s</span></div>
<div class="cell" style="left:755px;top:301px;width:32px;height:35px;background:#dcdcdc;text-align:right;padding-right:4px;letter-spacing:0.5px;">32</div>
<div class="cell" style="left:788px;top:301px;width:20px;height:35px;background:#dcdcdc;text-align:center;">0</div>
<div class="cell" style="left:809px;top:301px;width:73px;height:35px;background:#dcdcdc;"></div>
<div style="left:570px;top:312px;width:13px;height:13px;background:#fff;border-top:1px solid #808080;border-left:1px solid #808080;border-right:1px solid #fff;border-bottom:1px solid #fff;"></div>
<div style="left:571px;top:313px;width:11px;height:11px;background:#fff;border-top:1px solid #404040;border-left:1px solid #404040;border-right:1px solid #d4d0c8;border-bottom:1px solid #d4d0c8;"></div>
<div style="left:563px;top:337px;width:28px;height:35px;background:#a52a2a;"></div>
<div class="cell" style="left:592px;top:337px;width:45px;height:35px;background:#add8e6;color:#000;padding-left:4px;letter-spacing:2px;"><span style="position:static;display:inline-block;transform:scaleX(.72);transform-origin:0 50%;">TEMP</span></div>
<div class="cell" style="left:638px;top:337px;width:60px;height:35px;background:#fff;text-align:right;padding-right:5px;letter-spacing:1.2px;">27.3</div>
<div class="cell" style="left:699px;top:337px;width:55px;height:35px;background:#add8e6;padding-left:3px;letter-spacing:2.6px;"><span style="position:static;display:inline-block;transform:scaleX(1);transform-origin:0 50%;">℃</span></div>
<div class="cell" style="left:755px;top:337px;width:32px;height:35px;background:#dcdcdc;text-align:right;padding-right:4px;letter-spacing:0.5px;">782</div>
<div class="cell" style="left:788px;top:337px;width:20px;height:35px;background:#dcdcdc;text-align:center;">0</div>
<div class="cell" style="left:809px;top:337px;width:73px;height:35px;background:#dcdcdc;"></div>
<div style="left:570px;top:348px;width:13px;height:13px;background:#fff;border-top:1px solid #808080;border-left:1px solid #808080;border-right:1px solid #fff;border-bottom:1px solid #fff;"></div>
<div style="left:571px;top:349px;width:11px;height:11px;background:#fff;border-top:1px solid #404040;border-left:1px solid #404040;border-right:1px solid #d4d0c8;border-bottom:1px solid #d4d0c8;"></div>
<svg style="position:absolute;left:573px;top:351px" width="7" height="7"><path d="M0 2v3l2 2 5-5v-3l-5 5z" fill="#000"/></svg>
<div style="left:563px;top:373px;width:28px;height:35px;background:#d2691e;"></div>
<div class="cell" style="left:592px;top:373px;width:45px;height:35px;background:#add8e6;color:#000;padding-left:4px;letter-spacing:2px;"><span style="position:static;display:inline-block;transform:scaleX(.72);transform-origin:0 50%;">HUM</span></div>
<div class="cell" style="left:638px;top:373px;width:60px;height:35px;background:#fff;text-align:right;padding-right:5px;letter-spacing:1.2px;">63</div>
<div class="cell" style="left:699px;top:373px;width:55px;height:35px;background:#add8e6;padding-left:3px;letter-spacing:2.6px;"><span style="position:static;display:inline-block;transform:scaleX(0.72);transform-origin:0 50%;">%</span></div>
<div class="cell" style="left:755px;top:373px;width:32px;height:35px;background:#dcdcdc;text-align:right;padding-right:4px;letter-spacing:0.5px;">630</div>
<div class="cell" style="left:788px;top:373px;width:20px;height:35px;background:#dcdcdc;text-align:center;">0</div>
<div class="cell" style="left:809px;top:373px;width:73px;height:35px;background:#dcdcdc;"></div>
<div style="left:570px;top:384px;width:13px;height:13px;background:#fff;border-top:1px solid #808080;border-left:1px solid #808080;border-right:1px solid #fff;border-bottom:1px solid #fff;"></div>
<div style="left:571px;top:385px;width:11px;height:11px;background:#fff;border-top:1px solid #404040;border-left:1px solid #404040;border-right:1px solid #d4d0c8;border-bottom:1px solid #d4d0c8;"></div>
<svg style="position:absolute;left:573px;top:387px" width="7" height="7"><path d="M0 2v3l2 2 5-5v-3l-5 5z" fill="#000"/></svg>
<div style="left:560px;top:484px;width:362px;height:2px;background:#d4d0c8;"></div>
<div style="left:560px;top:486px;width:362px;height:1px;background:#ffffff;"></div>
<div style="left:560px;top:487px;width:362px;height:61px;background:#f5f5f5;border-top:1px solid #808080;border-left:1px solid #808080;"></div>
<div style="left:561px;top:488px;width:361px;height:60px;background:#f5f5f5;border-top:1px solid #404040;border-left:1px solid #404040;"></div>
<div style="left:560px;top:547px;width:362px;height:1px;background:#d4d0c8;"></div>
<div style="left:560px;top:548px;width:362px;height:2px;background:#ffffff;"></div>
<div style="left:906px;top:490px;width:16px;height:57px;background-image:conic-gradient(#fff 25%,#d4d0c8 0 50%,#fff 0 75%,#d4d0c8 0);background-size:2px 2px;"></div>
<div style="left:906px;top:490px;width:16px;height:16px;background:#d4d0c8;border-top:1px solid #fff;border-left:1px solid #fff;border-right:1px solid #404040;border-bottom:1px solid #404040;"></div>
<svg style="position:absolute;left:910px;top:496px" width="8" height="5"><path d="M0 4h7l-3.5-4z" fill="#808080"/></svg>
<div style="left:906px;top:531px;width:16px;height:16px;background:#d4d0c8;border-top:1px solid #fff;border-left:1px solid #fff;border-right:1px solid #404040;border-bottom:1px solid #404040;"></div>
<svg style="position:absolute;left:910px;top:537px" width="8" height="5"><path d="M0 0h7l-3.5 4z" fill="#808080"/></svg>
<div class="db" style="left:561px;top:550px;width:70px;height:26px;font-size:17px;line-height:24px;"><span style="position:static;display:inline-block;transform:scale(.62,1.4);margin:0 -3px;">＜</span>月</div>
<div class="db" style="left:631px;top:550px;width:70px;height:26px;font-size:17px;line-height:24px;"><span style="position:static;display:inline-block;transform:scale(.62,1.4);margin:0 -3px;">＜</span>日</div>
<div class="db" style="left:701px;top:550px;width:81px;height:26px;font-size:17px;line-height:24px;font-weight:bold;">最新</div>
<div class="db" style="left:782px;top:550px;width:70px;height:26px;font-size:17px;line-height:24px;">日<span style="position:static;display:inline-block;transform:scale(.62,1.4);margin:0 -3px;">＞</span></div>
<div class="db" style="left:852px;top:550px;width:70px;height:26px;font-size:17px;line-height:24px;">月<span style="position:static;display:inline-block;transform:scale(.62,1.4);margin:0 -3px;">＞</span></div>
<div class="rb" style="left:933px;top:31px;width:84px;height:24px;font-size:16px;line-height:21px;color:#ffb6c1;font-weight:bold;letter-spacing:0.7px;">調整中</div>
<div class="gl" style="left:933px;top:61px;width:84px;height:22px;"><span>OX</span></div>
<div class="gl" style="left:933px;top:85px;width:84px;height:22px;"><span>NO</span></div>
<div class="gl" style="left:933px;top:109px;width:84px;height:22px;"><span>NO2</span></div>
<div class="gl" style="left:933px;top:133px;width:84px;height:22px;"><span>CH4</span></div>
<div class="gl" style="left:933px;top:157px;width:84px;height:22px;"><span>NMHC</span></div>
<div class="gl" style="left:933px;top:181px;width:84px;height:22px;"><span>WD</span></div>
<div class="gl" style="left:933px;top:205px;width:84px;height:22px;"><span>WS</span></div>
<div class="gl" style="left:933px;top:229px;width:84px;height:22px;"><span>TEMP</span></div>
<div class="gl" style="left:933px;top:255px;width:84px;height:22px;"><span>HUM</span></div>
<div class="gl" style="left:933px;top:285px;width:84px;height:22px;"><span>SPM</span></div>
<svg style="position:absolute;left:1006px;top:591.5px" width="15" height="15"><path d="M1 15L15 1M5 15L15 5M9 15L15 9" stroke="#202020" stroke-width="1.4"/><path d="M2.2 15L15 2.2M6.2 15L15 6.2M10.2 15L15 10.2" stroke="#d4d0c8" stroke-width="0.8"/></svg></body></html>
